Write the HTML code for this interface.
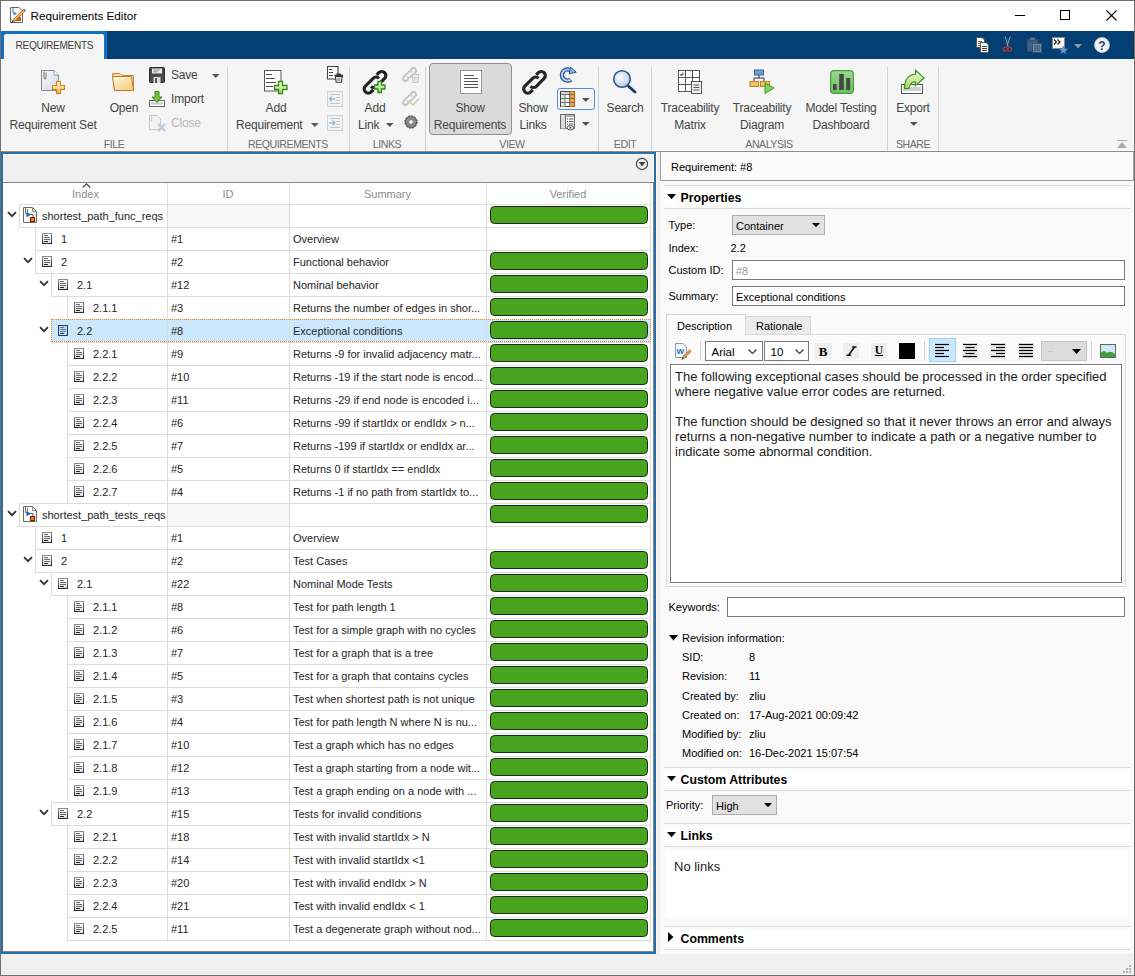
<!DOCTYPE html><html><head><meta charset="utf-8"><title>Requirements Editor</title>
<style>
html,body{margin:0;padding:0;}
body{width:1135px;height:976px;position:relative;overflow:hidden;background:#f0f0f0;font-family:"Liberation Sans", sans-serif;}
div,svg{box-sizing:border-box;}
</style></head><body>
<svg width="0" height="0" style="position:absolute"><defs><linearGradient id="gdi" x1="0" y1="0" x2="0" y2="1"><stop offset="0" stop-color="#ffffff"/><stop offset="1" stop-color="#d4e0ec"/></linearGradient><linearGradient id="gdb" x1="0" y1="0" x2="0" y2="1"><stop offset="0" stop-color="#8a8a8a"/><stop offset="1" stop-color="#2a2a2a"/></linearGradient></defs></svg>
<div style="position:absolute;left:0px;top:0px;width:1135px;height:31px;background:#fff;"></div>
<div style="position:absolute;left:0px;top:31px;width:1135px;height:28px;background:#033f72;"></div>
<div style="position:absolute;left:1px;top:31px;width:106px;height:28px;background:#126fc6;"></div>
<div style="position:absolute;left:4px;top:34px;width:100px;height:25px;background:#f5f5f5;border-radius:2px 2px 0 0;"></div>
<div style="position:absolute;left:0px;top:59px;width:1135px;height:92px;background:#f5f5f5;"></div>
<div style="position:absolute;left:0px;top:150px;width:1135px;height:1px;background:#ffffff;"></div>
<div style="position:absolute;left:0px;top:151px;width:1135px;height:1px;background:#8a8a8a;"></div>
<div style="position:absolute;left:30.50px;top:10.10px;font-size:11.7px;line-height:11.7px;color:#000;white-space:nowrap;">Requirements Editor</div>
<div style="position:absolute;left:1015px;top:15px;width:10px;height:1px;background:#000;"></div>
<div style="position:absolute;left:1060px;top:10px;width:10px;height:10px;border:1px solid #000;"></div>
<svg style="position:absolute;left:1106px;top:10px;" width="11" height="11" viewBox="0 0 11 11"><path d="M0.5 0.5 L10.5 10.5 M10.5 0.5 L0.5 10.5" stroke="#000" stroke-width="1.1"/></svg>
<div style="position:absolute;left:15.50px;top:41.15px;font-size:10.1px;line-height:10.1px;color:#3c3c3c;white-space:nowrap;letter-spacing:-0.3px;">REQUIREMENTS</div>
<div style="position:absolute;left:429px;top:63px;width:83px;height:72px;background:#dadada;border:1px solid #8f8f8f;border-radius:4px;"></div>
<div style="position:absolute;left:-47.00px;top:102.34px;width:200px;text-align:center;font-size:12px;line-height:12px;color:#444;white-space:nowrap;letter-spacing:-0.2px;">New</div>
<div style="position:absolute;left:-47.00px;top:118.54px;width:200px;text-align:center;font-size:12px;line-height:12px;color:#444;white-space:nowrap;letter-spacing:-0.2px;">Requirement Set</div>
<div style="position:absolute;left:24.00px;top:102.34px;width:200px;text-align:center;font-size:12px;line-height:12px;color:#444;white-space:nowrap;letter-spacing:-0.2px;">Open</div>
<div style="position:absolute;left:171.00px;top:69.34px;font-size:12px;line-height:12px;color:#444;white-space:nowrap;letter-spacing:-0.2px;">Save</div>
<div style="position:absolute;left:171.00px;top:93.34px;font-size:12px;line-height:12px;color:#444;white-space:nowrap;letter-spacing:-0.2px;">Import</div>
<div style="position:absolute;left:171.00px;top:117.34px;font-size:12px;line-height:12px;color:#b8b8b8;white-space:nowrap;letter-spacing:-0.2px;">Close</div>
<div style="position:absolute;left:176.00px;top:102.34px;width:200px;text-align:center;font-size:12px;line-height:12px;color:#444;white-space:nowrap;letter-spacing:-0.2px;">Add</div>
<div style="position:absolute;left:236.00px;top:118.54px;font-size:12px;line-height:12px;color:#444;white-space:nowrap;letter-spacing:-0.2px;">Requirement</div>
<div style="position:absolute;left:275.00px;top:102.34px;width:200px;text-align:center;font-size:12px;line-height:12px;color:#444;white-space:nowrap;letter-spacing:-0.2px;">Add</div>
<div style="position:absolute;left:358.00px;top:118.54px;font-size:12px;line-height:12px;color:#444;white-space:nowrap;letter-spacing:-0.2px;">Link</div>
<div style="position:absolute;left:370.00px;top:102.34px;width:200px;text-align:center;font-size:12px;line-height:12px;color:#444;white-space:nowrap;letter-spacing:-0.2px;">Show</div>
<div style="position:absolute;left:370.00px;top:118.54px;width:200px;text-align:center;font-size:12px;line-height:12px;color:#444;white-space:nowrap;letter-spacing:-0.2px;">Requirements</div>
<div style="position:absolute;left:433.00px;top:102.34px;width:200px;text-align:center;font-size:12px;line-height:12px;color:#444;white-space:nowrap;letter-spacing:-0.2px;">Show</div>
<div style="position:absolute;left:433.00px;top:118.54px;width:200px;text-align:center;font-size:12px;line-height:12px;color:#444;white-space:nowrap;letter-spacing:-0.2px;">Links</div>
<div style="position:absolute;left:525.00px;top:102.34px;width:200px;text-align:center;font-size:12px;line-height:12px;color:#444;white-space:nowrap;letter-spacing:-0.2px;">Search</div>
<div style="position:absolute;left:590.00px;top:102.34px;width:200px;text-align:center;font-size:12px;line-height:12px;color:#444;white-space:nowrap;letter-spacing:-0.2px;">Traceability</div>
<div style="position:absolute;left:590.00px;top:118.54px;width:200px;text-align:center;font-size:12px;line-height:12px;color:#444;white-space:nowrap;letter-spacing:-0.2px;">Matrix</div>
<div style="position:absolute;left:662.00px;top:102.34px;width:200px;text-align:center;font-size:12px;line-height:12px;color:#444;white-space:nowrap;letter-spacing:-0.2px;">Traceability</div>
<div style="position:absolute;left:662.00px;top:118.54px;width:200px;text-align:center;font-size:12px;line-height:12px;color:#444;white-space:nowrap;letter-spacing:-0.2px;">Diagram</div>
<div style="position:absolute;left:741.00px;top:102.34px;width:200px;text-align:center;font-size:12px;line-height:12px;color:#444;white-space:nowrap;letter-spacing:-0.2px;">Model Testing</div>
<div style="position:absolute;left:741.00px;top:118.54px;width:200px;text-align:center;font-size:12px;line-height:12px;color:#444;white-space:nowrap;letter-spacing:-0.2px;">Dashboard</div>
<div style="position:absolute;left:813.00px;top:102.34px;width:200px;text-align:center;font-size:12px;line-height:12px;color:#444;white-space:nowrap;letter-spacing:-0.2px;">Export</div>
<div style="position:absolute;left:14.00px;top:138.93px;width:200px;text-align:center;font-size:10.6px;line-height:10.6px;color:#6e6e6e;white-space:nowrap;letter-spacing:-0.45px;">FILE</div>
<div style="position:absolute;left:188.00px;top:138.93px;width:200px;text-align:center;font-size:10.6px;line-height:10.6px;color:#6e6e6e;white-space:nowrap;letter-spacing:-0.45px;">REQUIREMENTS</div>
<div style="position:absolute;left:287.00px;top:138.93px;width:200px;text-align:center;font-size:10.6px;line-height:10.6px;color:#6e6e6e;white-space:nowrap;letter-spacing:-0.45px;">LINKS</div>
<div style="position:absolute;left:412.00px;top:138.93px;width:200px;text-align:center;font-size:10.6px;line-height:10.6px;color:#6e6e6e;white-space:nowrap;letter-spacing:-0.45px;">VIEW</div>
<div style="position:absolute;left:525.00px;top:138.93px;width:200px;text-align:center;font-size:10.6px;line-height:10.6px;color:#6e6e6e;white-space:nowrap;letter-spacing:-0.45px;">EDIT</div>
<div style="position:absolute;left:669.00px;top:138.93px;width:200px;text-align:center;font-size:10.6px;line-height:10.6px;color:#6e6e6e;white-space:nowrap;letter-spacing:-0.45px;">ANALYSIS</div>
<div style="position:absolute;left:813.00px;top:138.93px;width:200px;text-align:center;font-size:10.6px;line-height:10.6px;color:#6e6e6e;white-space:nowrap;letter-spacing:-0.45px;">SHARE</div>
<div style="position:absolute;left:227px;top:67px;width:1px;height:84px;background:#d2d2d2;"></div>
<div style="position:absolute;left:349px;top:67px;width:1px;height:84px;background:#d2d2d2;"></div>
<div style="position:absolute;left:425px;top:67px;width:1px;height:84px;background:#d2d2d2;"></div>
<div style="position:absolute;left:598px;top:67px;width:1px;height:84px;background:#d2d2d2;"></div>
<div style="position:absolute;left:651px;top:67px;width:1px;height:84px;background:#d2d2d2;"></div>
<div style="position:absolute;left:887px;top:67px;width:1px;height:84px;background:#d2d2d2;"></div>
<div style="position:absolute;left:938px;top:67px;width:1px;height:84px;background:#d2d2d2;"></div>
<div style="position:absolute;left:1px;top:152px;width:655px;height:802px;border:2px solid #2a6ea6;background:#fff;"></div>
<div style="position:absolute;left:3px;top:154px;width:651px;height:1px;background:#fbf7f5;"></div>
<div style="position:absolute;left:3px;top:155px;width:650px;height:27px;background:#f0f0f0;"></div>
<div style="position:absolute;left:3px;top:182px;width:650px;height:1px;background:#80868e;"></div>
<div style="position:absolute;left:653px;top:182px;width:1px;height:770px;background:#80868e;"></div>
<div style="position:absolute;left:3px;top:951px;width:651px;height:1px;background:#80868e;"></div>
<svg style="position:absolute;left:635px;top:157px;" width="14" height="14" viewBox="0 0 14 14"><circle cx="7" cy="7" r="5.6" fill="none" stroke="#3a3a3a" stroke-width="1.1"/><path d="M3.6 5 H10.4 L7 9.6Z" fill="#444"/></svg>
<div style="position:absolute;left:5.50px;top:188.69px;width:160px;text-align:center;font-size:11px;line-height:11px;color:#8c8c8c;white-space:nowrap;">Index</div>
<svg style="position:absolute;left:82px;top:183px;" width="9" height="5" viewBox="0 0 9 5"><path d="M0.8 4.5 L4.5 0.8 L8.2 4.5" fill="none" stroke="#444" stroke-width="1.1"/></svg>
<div style="position:absolute;left:168.00px;top:188.69px;width:120px;text-align:center;font-size:11px;line-height:11px;color:#8c8c8c;white-space:nowrap;">ID</div>
<div style="position:absolute;left:292.50px;top:188.69px;width:190px;text-align:center;font-size:11px;line-height:11px;color:#8c8c8c;white-space:nowrap;">Summary</div>
<div style="position:absolute;left:488.00px;top:188.69px;width:160px;text-align:center;font-size:11px;line-height:11px;color:#8c8c8c;white-space:nowrap;">Verified</div>
<div style="position:absolute;left:167px;top:183px;width:1px;height:21px;background:#e3e3e3;"></div>
<div style="position:absolute;left:289px;top:183px;width:1px;height:21px;background:#e3e3e3;"></div>
<div style="position:absolute;left:486px;top:183px;width:1px;height:21px;background:#e3e3e3;"></div>
<div style="position:absolute;left:650px;top:183px;width:1px;height:21px;background:#e3e3e3;"></div>
<div style="position:absolute;left:19px;top:204px;width:632px;height:24px;border:1px solid #dcdcdc;background:#fff;"></div>
<div style="position:absolute;left:168px;top:205px;width:121px;height:22px;background:#f7f7f7;"></div>
<svg style="position:absolute;left:23px;top:207px;" width="14" height="16" viewBox="0 0 14 16"><path d="M0.5 0.5 H9.5 L13.5 4.5 V15.5 H0.5Z" fill="#fff" stroke="#6a6a6a"/><path d="M9.5 0.5 V4.5 H13.5" fill="none" stroke="#8a8a8a"/><path d="M2.5 1 V6.5 H4 M4.5 2 V5.5" fill="none" stroke="#6a7a6a"/><path d="M3.5 5 L8 7.5 L3.5 10.5Z" fill="#1f64b8"/><path d="M7.5 7.5 H10 V10.5" fill="none" stroke="#555"/><rect x="7" y="10" width="5" height="5" fill="#7a1800"/><rect x="8" y="11" width="3" height="3" fill="#f08020"/></svg>
<div style="position:absolute;left:42.00px;top:210.69px;font-size:11px;line-height:11px;color:#262626;white-space:nowrap;">shortest_path_func_reqs</div>
<svg style="position:absolute;left:6.5px;top:211px;" width="10" height="7" viewBox="0 0 10 7"><path d="M1 1.2 L5 5.2 L9 1.2" fill="none" stroke="#333" stroke-width="1.8"/></svg>
<div style="position:absolute;left:167px;top:204px;width:1px;height:24px;background:#dcdcdc;"></div>
<div style="position:absolute;left:289px;top:204px;width:1px;height:24px;background:#dcdcdc;"></div>
<div style="position:absolute;left:486px;top:204px;width:1px;height:24px;background:#dcdcdc;"></div>
<div style="position:absolute;left:489.5px;top:206.1px;width:158.6px;height:18px;background:#48a41e;border:1.25px solid #1b2a12;border-radius:4.5px;"></div>
<div style="position:absolute;left:35px;top:227px;width:616px;height:24px;border:1px solid #dcdcdc;background:#fff;"></div>
<svg style="position:absolute;left:42px;top:233px;" width="10" height="11" viewBox="0 0 10 11"><rect x="0.5" y="0.5" width="9" height="10" fill="url(#gdi)" stroke="url(#gdb)"/><path d="M2 2.5h4M2 4.5h6M2 6.5h6" stroke="#6a6a6a" stroke-width="1"/><path d="M2 8.5h4" stroke="#2a2a2a" stroke-width="1"/></svg>
<div style="position:absolute;left:61.00px;top:233.69px;font-size:11px;line-height:11px;color:#262626;white-space:nowrap;">1</div>
<div style="position:absolute;left:171.00px;top:233.69px;font-size:11px;line-height:11px;color:#262626;white-space:nowrap;">#1</div>
<div style="position:absolute;left:293.00px;top:233.69px;font-size:11px;line-height:11px;color:#262626;white-space:nowrap;">Overview</div>
<div style="position:absolute;left:167px;top:227px;width:1px;height:24px;background:#dcdcdc;"></div>
<div style="position:absolute;left:289px;top:227px;width:1px;height:24px;background:#dcdcdc;"></div>
<div style="position:absolute;left:486px;top:227px;width:1px;height:24px;background:#dcdcdc;"></div>
<div style="position:absolute;left:35px;top:250px;width:616px;height:24px;border:1px solid #dcdcdc;background:#fff;"></div>
<svg style="position:absolute;left:42px;top:256px;" width="10" height="11" viewBox="0 0 10 11"><rect x="0.5" y="0.5" width="9" height="10" fill="url(#gdi)" stroke="url(#gdb)"/><path d="M2 2.5h4M2 4.5h6M2 6.5h6" stroke="#6a6a6a" stroke-width="1"/><path d="M2 8.5h4" stroke="#2a2a2a" stroke-width="1"/></svg>
<div style="position:absolute;left:61.00px;top:256.69px;font-size:11px;line-height:11px;color:#262626;white-space:nowrap;">2</div>
<div style="position:absolute;left:171.00px;top:256.69px;font-size:11px;line-height:11px;color:#262626;white-space:nowrap;">#2</div>
<div style="position:absolute;left:293.00px;top:256.69px;font-size:11px;line-height:11px;color:#262626;white-space:nowrap;">Functional behavior</div>
<svg style="position:absolute;left:22.5px;top:257px;" width="10" height="7" viewBox="0 0 10 7"><path d="M1 1.2 L5 5.2 L9 1.2" fill="none" stroke="#333" stroke-width="1.8"/></svg>
<div style="position:absolute;left:167px;top:250px;width:1px;height:24px;background:#dcdcdc;"></div>
<div style="position:absolute;left:289px;top:250px;width:1px;height:24px;background:#dcdcdc;"></div>
<div style="position:absolute;left:486px;top:250px;width:1px;height:24px;background:#dcdcdc;"></div>
<div style="position:absolute;left:489.5px;top:252.1px;width:158.6px;height:18px;background:#48a41e;border:1.25px solid #1b2a12;border-radius:4.5px;"></div>
<div style="position:absolute;left:51px;top:273px;width:600px;height:24px;border:1px solid #dcdcdc;background:#fff;"></div>
<svg style="position:absolute;left:58px;top:279px;" width="10" height="11" viewBox="0 0 10 11"><rect x="0.5" y="0.5" width="9" height="10" fill="url(#gdi)" stroke="url(#gdb)"/><path d="M2 2.5h4M2 4.5h6M2 6.5h6" stroke="#6a6a6a" stroke-width="1"/><path d="M2 8.5h4" stroke="#2a2a2a" stroke-width="1"/></svg>
<div style="position:absolute;left:77.00px;top:279.69px;font-size:11px;line-height:11px;color:#262626;white-space:nowrap;">2.1</div>
<div style="position:absolute;left:171.00px;top:279.69px;font-size:11px;line-height:11px;color:#262626;white-space:nowrap;">#12</div>
<div style="position:absolute;left:293.00px;top:279.69px;font-size:11px;line-height:11px;color:#262626;white-space:nowrap;">Nominal behavior</div>
<svg style="position:absolute;left:38.5px;top:280px;" width="10" height="7" viewBox="0 0 10 7"><path d="M1 1.2 L5 5.2 L9 1.2" fill="none" stroke="#333" stroke-width="1.8"/></svg>
<div style="position:absolute;left:167px;top:273px;width:1px;height:24px;background:#dcdcdc;"></div>
<div style="position:absolute;left:289px;top:273px;width:1px;height:24px;background:#dcdcdc;"></div>
<div style="position:absolute;left:486px;top:273px;width:1px;height:24px;background:#dcdcdc;"></div>
<div style="position:absolute;left:489.5px;top:275.1px;width:158.6px;height:18px;background:#48a41e;border:1.25px solid #1b2a12;border-radius:4.5px;"></div>
<div style="position:absolute;left:67px;top:296px;width:584px;height:24px;border:1px solid #dcdcdc;background:#fff;"></div>
<svg style="position:absolute;left:74px;top:302px;" width="10" height="11" viewBox="0 0 10 11"><rect x="0.5" y="0.5" width="9" height="10" fill="url(#gdi)" stroke="url(#gdb)"/><path d="M2 2.5h4M2 4.5h6M2 6.5h6" stroke="#6a6a6a" stroke-width="1"/><path d="M2 8.5h4" stroke="#2a2a2a" stroke-width="1"/></svg>
<div style="position:absolute;left:93.00px;top:302.69px;font-size:11px;line-height:11px;color:#262626;white-space:nowrap;">2.1.1</div>
<div style="position:absolute;left:171.00px;top:302.69px;font-size:11px;line-height:11px;color:#262626;white-space:nowrap;">#3</div>
<div style="position:absolute;left:293.00px;top:302.69px;font-size:11px;line-height:11px;color:#262626;white-space:nowrap;">Returns the number of edges in shor...</div>
<div style="position:absolute;left:167px;top:296px;width:1px;height:24px;background:#dcdcdc;"></div>
<div style="position:absolute;left:289px;top:296px;width:1px;height:24px;background:#dcdcdc;"></div>
<div style="position:absolute;left:486px;top:296px;width:1px;height:24px;background:#dcdcdc;"></div>
<div style="position:absolute;left:489.5px;top:298.1px;width:158.6px;height:18px;background:#48a41e;border:1.25px solid #1b2a12;border-radius:4.5px;"></div>
<div style="position:absolute;left:51px;top:319px;width:600px;height:24px;border:1px solid #dcdcdc;background:#fff;"></div>
<div style="position:absolute;left:52px;top:320px;width:598px;height:21px;background:#cce8ff;"></div>
<svg style="position:absolute;left:58px;top:325px;" width="10" height="11" viewBox="0 0 10 11"><rect x="0.5" y="0.5" width="9" height="10" fill="#c4d8ec" stroke="#1f3f66"/><path d="M2 2.5h4M2 4.5h6M2 6.5h6" stroke="#5a7aa0" stroke-width="1"/><path d="M2 8.5h4" stroke="#1f3f66" stroke-width="1"/></svg>
<div style="position:absolute;left:77.00px;top:325.69px;font-size:11px;line-height:11px;color:#262626;white-space:nowrap;">2.2</div>
<div style="position:absolute;left:171.00px;top:325.69px;font-size:11px;line-height:11px;color:#262626;white-space:nowrap;">#8</div>
<div style="position:absolute;left:293.00px;top:325.69px;font-size:11px;line-height:11px;color:#262626;white-space:nowrap;">Exceptional conditions</div>
<svg style="position:absolute;left:38.5px;top:326px;" width="10" height="7" viewBox="0 0 10 7"><path d="M1 1.2 L5 5.2 L9 1.2" fill="none" stroke="#333" stroke-width="1.8"/></svg>
<div style="position:absolute;left:167px;top:319px;width:1px;height:24px;background:#dcdcdc;"></div>
<div style="position:absolute;left:289px;top:319px;width:1px;height:24px;background:#dcdcdc;"></div>
<div style="position:absolute;left:486px;top:319px;width:1px;height:24px;background:#dcdcdc;"></div>
<div style="position:absolute;left:489.5px;top:321.1px;width:158.6px;height:18px;background:#48a41e;border:1.25px solid #1b2a12;border-radius:4.5px;"></div>
<div style="position:absolute;left:51px;top:319px;width:600px;height:23px;border:1px dotted #f08a24;"></div>
<div style="position:absolute;left:67px;top:342px;width:584px;height:24px;border:1px solid #dcdcdc;background:#fff;"></div>
<svg style="position:absolute;left:74px;top:348px;" width="10" height="11" viewBox="0 0 10 11"><rect x="0.5" y="0.5" width="9" height="10" fill="url(#gdi)" stroke="url(#gdb)"/><path d="M2 2.5h4M2 4.5h6M2 6.5h6" stroke="#6a6a6a" stroke-width="1"/><path d="M2 8.5h4" stroke="#2a2a2a" stroke-width="1"/></svg>
<div style="position:absolute;left:93.00px;top:348.69px;font-size:11px;line-height:11px;color:#262626;white-space:nowrap;">2.2.1</div>
<div style="position:absolute;left:171.00px;top:348.69px;font-size:11px;line-height:11px;color:#262626;white-space:nowrap;">#9</div>
<div style="position:absolute;left:293.00px;top:348.69px;font-size:11px;line-height:11px;color:#262626;white-space:nowrap;">Returns -9 for invalid adjacency matr...</div>
<div style="position:absolute;left:167px;top:342px;width:1px;height:24px;background:#dcdcdc;"></div>
<div style="position:absolute;left:289px;top:342px;width:1px;height:24px;background:#dcdcdc;"></div>
<div style="position:absolute;left:486px;top:342px;width:1px;height:24px;background:#dcdcdc;"></div>
<div style="position:absolute;left:489.5px;top:344.1px;width:158.6px;height:18px;background:#48a41e;border:1.25px solid #1b2a12;border-radius:4.5px;"></div>
<div style="position:absolute;left:67px;top:365px;width:584px;height:24px;border:1px solid #dcdcdc;background:#fff;"></div>
<svg style="position:absolute;left:74px;top:371px;" width="10" height="11" viewBox="0 0 10 11"><rect x="0.5" y="0.5" width="9" height="10" fill="url(#gdi)" stroke="url(#gdb)"/><path d="M2 2.5h4M2 4.5h6M2 6.5h6" stroke="#6a6a6a" stroke-width="1"/><path d="M2 8.5h4" stroke="#2a2a2a" stroke-width="1"/></svg>
<div style="position:absolute;left:93.00px;top:371.69px;font-size:11px;line-height:11px;color:#262626;white-space:nowrap;">2.2.2</div>
<div style="position:absolute;left:171.00px;top:371.69px;font-size:11px;line-height:11px;color:#262626;white-space:nowrap;">#10</div>
<div style="position:absolute;left:293.00px;top:371.69px;font-size:11px;line-height:11px;color:#262626;white-space:nowrap;">Returns -19 if the start node is encod...</div>
<div style="position:absolute;left:167px;top:365px;width:1px;height:24px;background:#dcdcdc;"></div>
<div style="position:absolute;left:289px;top:365px;width:1px;height:24px;background:#dcdcdc;"></div>
<div style="position:absolute;left:486px;top:365px;width:1px;height:24px;background:#dcdcdc;"></div>
<div style="position:absolute;left:489.5px;top:367.1px;width:158.6px;height:18px;background:#48a41e;border:1.25px solid #1b2a12;border-radius:4.5px;"></div>
<div style="position:absolute;left:67px;top:388px;width:584px;height:24px;border:1px solid #dcdcdc;background:#fff;"></div>
<svg style="position:absolute;left:74px;top:394px;" width="10" height="11" viewBox="0 0 10 11"><rect x="0.5" y="0.5" width="9" height="10" fill="url(#gdi)" stroke="url(#gdb)"/><path d="M2 2.5h4M2 4.5h6M2 6.5h6" stroke="#6a6a6a" stroke-width="1"/><path d="M2 8.5h4" stroke="#2a2a2a" stroke-width="1"/></svg>
<div style="position:absolute;left:93.00px;top:394.69px;font-size:11px;line-height:11px;color:#262626;white-space:nowrap;">2.2.3</div>
<div style="position:absolute;left:171.00px;top:394.69px;font-size:11px;line-height:11px;color:#262626;white-space:nowrap;">#11</div>
<div style="position:absolute;left:293.00px;top:394.69px;font-size:11px;line-height:11px;color:#262626;white-space:nowrap;">Returns -29 if end node is encoded i...</div>
<div style="position:absolute;left:167px;top:388px;width:1px;height:24px;background:#dcdcdc;"></div>
<div style="position:absolute;left:289px;top:388px;width:1px;height:24px;background:#dcdcdc;"></div>
<div style="position:absolute;left:486px;top:388px;width:1px;height:24px;background:#dcdcdc;"></div>
<div style="position:absolute;left:489.5px;top:390.1px;width:158.6px;height:18px;background:#48a41e;border:1.25px solid #1b2a12;border-radius:4.5px;"></div>
<div style="position:absolute;left:67px;top:411px;width:584px;height:24px;border:1px solid #dcdcdc;background:#fff;"></div>
<svg style="position:absolute;left:74px;top:417px;" width="10" height="11" viewBox="0 0 10 11"><rect x="0.5" y="0.5" width="9" height="10" fill="url(#gdi)" stroke="url(#gdb)"/><path d="M2 2.5h4M2 4.5h6M2 6.5h6" stroke="#6a6a6a" stroke-width="1"/><path d="M2 8.5h4" stroke="#2a2a2a" stroke-width="1"/></svg>
<div style="position:absolute;left:93.00px;top:417.69px;font-size:11px;line-height:11px;color:#262626;white-space:nowrap;">2.2.4</div>
<div style="position:absolute;left:171.00px;top:417.69px;font-size:11px;line-height:11px;color:#262626;white-space:nowrap;">#6</div>
<div style="position:absolute;left:293.00px;top:417.69px;font-size:11px;line-height:11px;color:#262626;white-space:nowrap;">Returns -99 if startIdx or endIdx &gt; n...</div>
<div style="position:absolute;left:167px;top:411px;width:1px;height:24px;background:#dcdcdc;"></div>
<div style="position:absolute;left:289px;top:411px;width:1px;height:24px;background:#dcdcdc;"></div>
<div style="position:absolute;left:486px;top:411px;width:1px;height:24px;background:#dcdcdc;"></div>
<div style="position:absolute;left:489.5px;top:413.1px;width:158.6px;height:18px;background:#48a41e;border:1.25px solid #1b2a12;border-radius:4.5px;"></div>
<div style="position:absolute;left:67px;top:434px;width:584px;height:24px;border:1px solid #dcdcdc;background:#fff;"></div>
<svg style="position:absolute;left:74px;top:440px;" width="10" height="11" viewBox="0 0 10 11"><rect x="0.5" y="0.5" width="9" height="10" fill="url(#gdi)" stroke="url(#gdb)"/><path d="M2 2.5h4M2 4.5h6M2 6.5h6" stroke="#6a6a6a" stroke-width="1"/><path d="M2 8.5h4" stroke="#2a2a2a" stroke-width="1"/></svg>
<div style="position:absolute;left:93.00px;top:440.69px;font-size:11px;line-height:11px;color:#262626;white-space:nowrap;">2.2.5</div>
<div style="position:absolute;left:171.00px;top:440.69px;font-size:11px;line-height:11px;color:#262626;white-space:nowrap;">#7</div>
<div style="position:absolute;left:293.00px;top:440.69px;font-size:11px;line-height:11px;color:#262626;white-space:nowrap;">Returns -199 if startIdx or endIdx ar...</div>
<div style="position:absolute;left:167px;top:434px;width:1px;height:24px;background:#dcdcdc;"></div>
<div style="position:absolute;left:289px;top:434px;width:1px;height:24px;background:#dcdcdc;"></div>
<div style="position:absolute;left:486px;top:434px;width:1px;height:24px;background:#dcdcdc;"></div>
<div style="position:absolute;left:489.5px;top:436.1px;width:158.6px;height:18px;background:#48a41e;border:1.25px solid #1b2a12;border-radius:4.5px;"></div>
<div style="position:absolute;left:67px;top:457px;width:584px;height:24px;border:1px solid #dcdcdc;background:#fff;"></div>
<svg style="position:absolute;left:74px;top:463px;" width="10" height="11" viewBox="0 0 10 11"><rect x="0.5" y="0.5" width="9" height="10" fill="url(#gdi)" stroke="url(#gdb)"/><path d="M2 2.5h4M2 4.5h6M2 6.5h6" stroke="#6a6a6a" stroke-width="1"/><path d="M2 8.5h4" stroke="#2a2a2a" stroke-width="1"/></svg>
<div style="position:absolute;left:93.00px;top:463.69px;font-size:11px;line-height:11px;color:#262626;white-space:nowrap;">2.2.6</div>
<div style="position:absolute;left:171.00px;top:463.69px;font-size:11px;line-height:11px;color:#262626;white-space:nowrap;">#5</div>
<div style="position:absolute;left:293.00px;top:463.69px;font-size:11px;line-height:11px;color:#262626;white-space:nowrap;">Returns 0 if startIdx == endIdx</div>
<div style="position:absolute;left:167px;top:457px;width:1px;height:24px;background:#dcdcdc;"></div>
<div style="position:absolute;left:289px;top:457px;width:1px;height:24px;background:#dcdcdc;"></div>
<div style="position:absolute;left:486px;top:457px;width:1px;height:24px;background:#dcdcdc;"></div>
<div style="position:absolute;left:489.5px;top:459.1px;width:158.6px;height:18px;background:#48a41e;border:1.25px solid #1b2a12;border-radius:4.5px;"></div>
<div style="position:absolute;left:67px;top:480px;width:584px;height:24px;border:1px solid #dcdcdc;background:#fff;"></div>
<svg style="position:absolute;left:74px;top:486px;" width="10" height="11" viewBox="0 0 10 11"><rect x="0.5" y="0.5" width="9" height="10" fill="url(#gdi)" stroke="url(#gdb)"/><path d="M2 2.5h4M2 4.5h6M2 6.5h6" stroke="#6a6a6a" stroke-width="1"/><path d="M2 8.5h4" stroke="#2a2a2a" stroke-width="1"/></svg>
<div style="position:absolute;left:93.00px;top:486.69px;font-size:11px;line-height:11px;color:#262626;white-space:nowrap;">2.2.7</div>
<div style="position:absolute;left:171.00px;top:486.69px;font-size:11px;line-height:11px;color:#262626;white-space:nowrap;">#4</div>
<div style="position:absolute;left:293.00px;top:486.69px;font-size:11px;line-height:11px;color:#262626;white-space:nowrap;">Returns -1 if no path from startIdx to...</div>
<div style="position:absolute;left:167px;top:480px;width:1px;height:24px;background:#dcdcdc;"></div>
<div style="position:absolute;left:289px;top:480px;width:1px;height:24px;background:#dcdcdc;"></div>
<div style="position:absolute;left:486px;top:480px;width:1px;height:24px;background:#dcdcdc;"></div>
<div style="position:absolute;left:489.5px;top:482.1px;width:158.6px;height:18px;background:#48a41e;border:1.25px solid #1b2a12;border-radius:4.5px;"></div>
<div style="position:absolute;left:19px;top:503px;width:632px;height:24px;border:1px solid #dcdcdc;background:#fff;"></div>
<div style="position:absolute;left:168px;top:504px;width:121px;height:22px;background:#f7f7f7;"></div>
<svg style="position:absolute;left:23px;top:506px;" width="14" height="16" viewBox="0 0 14 16"><path d="M0.5 0.5 H9.5 L13.5 4.5 V15.5 H0.5Z" fill="#fff" stroke="#6a6a6a"/><path d="M9.5 0.5 V4.5 H13.5" fill="none" stroke="#8a8a8a"/><path d="M2.5 1 V6.5 H4 M4.5 2 V5.5" fill="none" stroke="#6a7a6a"/><path d="M3.5 5 L8 7.5 L3.5 10.5Z" fill="#1f64b8"/><path d="M7.5 7.5 H10 V10.5" fill="none" stroke="#555"/><rect x="7" y="10" width="5" height="5" fill="#7a1800"/><rect x="8" y="11" width="3" height="3" fill="#f08020"/></svg>
<div style="position:absolute;left:42.00px;top:509.69px;font-size:11px;line-height:11px;color:#262626;white-space:nowrap;">shortest_path_tests_reqs</div>
<svg style="position:absolute;left:6.5px;top:510px;" width="10" height="7" viewBox="0 0 10 7"><path d="M1 1.2 L5 5.2 L9 1.2" fill="none" stroke="#333" stroke-width="1.8"/></svg>
<div style="position:absolute;left:167px;top:503px;width:1px;height:24px;background:#dcdcdc;"></div>
<div style="position:absolute;left:289px;top:503px;width:1px;height:24px;background:#dcdcdc;"></div>
<div style="position:absolute;left:486px;top:503px;width:1px;height:24px;background:#dcdcdc;"></div>
<div style="position:absolute;left:489.5px;top:505.1px;width:158.6px;height:18px;background:#48a41e;border:1.25px solid #1b2a12;border-radius:4.5px;"></div>
<div style="position:absolute;left:35px;top:526px;width:616px;height:24px;border:1px solid #dcdcdc;background:#fff;"></div>
<svg style="position:absolute;left:42px;top:532px;" width="10" height="11" viewBox="0 0 10 11"><rect x="0.5" y="0.5" width="9" height="10" fill="url(#gdi)" stroke="url(#gdb)"/><path d="M2 2.5h4M2 4.5h6M2 6.5h6" stroke="#6a6a6a" stroke-width="1"/><path d="M2 8.5h4" stroke="#2a2a2a" stroke-width="1"/></svg>
<div style="position:absolute;left:61.00px;top:532.69px;font-size:11px;line-height:11px;color:#262626;white-space:nowrap;">1</div>
<div style="position:absolute;left:171.00px;top:532.69px;font-size:11px;line-height:11px;color:#262626;white-space:nowrap;">#1</div>
<div style="position:absolute;left:293.00px;top:532.69px;font-size:11px;line-height:11px;color:#262626;white-space:nowrap;">Overview</div>
<div style="position:absolute;left:167px;top:526px;width:1px;height:24px;background:#dcdcdc;"></div>
<div style="position:absolute;left:289px;top:526px;width:1px;height:24px;background:#dcdcdc;"></div>
<div style="position:absolute;left:486px;top:526px;width:1px;height:24px;background:#dcdcdc;"></div>
<div style="position:absolute;left:35px;top:549px;width:616px;height:24px;border:1px solid #dcdcdc;background:#fff;"></div>
<svg style="position:absolute;left:42px;top:555px;" width="10" height="11" viewBox="0 0 10 11"><rect x="0.5" y="0.5" width="9" height="10" fill="url(#gdi)" stroke="url(#gdb)"/><path d="M2 2.5h4M2 4.5h6M2 6.5h6" stroke="#6a6a6a" stroke-width="1"/><path d="M2 8.5h4" stroke="#2a2a2a" stroke-width="1"/></svg>
<div style="position:absolute;left:61.00px;top:555.69px;font-size:11px;line-height:11px;color:#262626;white-space:nowrap;">2</div>
<div style="position:absolute;left:171.00px;top:555.69px;font-size:11px;line-height:11px;color:#262626;white-space:nowrap;">#2</div>
<div style="position:absolute;left:293.00px;top:555.69px;font-size:11px;line-height:11px;color:#262626;white-space:nowrap;">Test Cases</div>
<svg style="position:absolute;left:22.5px;top:556px;" width="10" height="7" viewBox="0 0 10 7"><path d="M1 1.2 L5 5.2 L9 1.2" fill="none" stroke="#333" stroke-width="1.8"/></svg>
<div style="position:absolute;left:167px;top:549px;width:1px;height:24px;background:#dcdcdc;"></div>
<div style="position:absolute;left:289px;top:549px;width:1px;height:24px;background:#dcdcdc;"></div>
<div style="position:absolute;left:486px;top:549px;width:1px;height:24px;background:#dcdcdc;"></div>
<div style="position:absolute;left:489.5px;top:551.1px;width:158.6px;height:18px;background:#48a41e;border:1.25px solid #1b2a12;border-radius:4.5px;"></div>
<div style="position:absolute;left:51px;top:572px;width:600px;height:24px;border:1px solid #dcdcdc;background:#fff;"></div>
<svg style="position:absolute;left:58px;top:578px;" width="10" height="11" viewBox="0 0 10 11"><rect x="0.5" y="0.5" width="9" height="10" fill="url(#gdi)" stroke="url(#gdb)"/><path d="M2 2.5h4M2 4.5h6M2 6.5h6" stroke="#6a6a6a" stroke-width="1"/><path d="M2 8.5h4" stroke="#2a2a2a" stroke-width="1"/></svg>
<div style="position:absolute;left:77.00px;top:578.69px;font-size:11px;line-height:11px;color:#262626;white-space:nowrap;">2.1</div>
<div style="position:absolute;left:171.00px;top:578.69px;font-size:11px;line-height:11px;color:#262626;white-space:nowrap;">#22</div>
<div style="position:absolute;left:293.00px;top:578.69px;font-size:11px;line-height:11px;color:#262626;white-space:nowrap;">Nominal Mode Tests</div>
<svg style="position:absolute;left:38.5px;top:579px;" width="10" height="7" viewBox="0 0 10 7"><path d="M1 1.2 L5 5.2 L9 1.2" fill="none" stroke="#333" stroke-width="1.8"/></svg>
<div style="position:absolute;left:167px;top:572px;width:1px;height:24px;background:#dcdcdc;"></div>
<div style="position:absolute;left:289px;top:572px;width:1px;height:24px;background:#dcdcdc;"></div>
<div style="position:absolute;left:486px;top:572px;width:1px;height:24px;background:#dcdcdc;"></div>
<div style="position:absolute;left:489.5px;top:574.1px;width:158.6px;height:18px;background:#48a41e;border:1.25px solid #1b2a12;border-radius:4.5px;"></div>
<div style="position:absolute;left:67px;top:595px;width:584px;height:24px;border:1px solid #dcdcdc;background:#fff;"></div>
<svg style="position:absolute;left:74px;top:601px;" width="10" height="11" viewBox="0 0 10 11"><rect x="0.5" y="0.5" width="9" height="10" fill="url(#gdi)" stroke="url(#gdb)"/><path d="M2 2.5h4M2 4.5h6M2 6.5h6" stroke="#6a6a6a" stroke-width="1"/><path d="M2 8.5h4" stroke="#2a2a2a" stroke-width="1"/></svg>
<div style="position:absolute;left:93.00px;top:601.69px;font-size:11px;line-height:11px;color:#262626;white-space:nowrap;">2.1.1</div>
<div style="position:absolute;left:171.00px;top:601.69px;font-size:11px;line-height:11px;color:#262626;white-space:nowrap;">#8</div>
<div style="position:absolute;left:293.00px;top:601.69px;font-size:11px;line-height:11px;color:#262626;white-space:nowrap;">Test for path length 1</div>
<div style="position:absolute;left:167px;top:595px;width:1px;height:24px;background:#dcdcdc;"></div>
<div style="position:absolute;left:289px;top:595px;width:1px;height:24px;background:#dcdcdc;"></div>
<div style="position:absolute;left:486px;top:595px;width:1px;height:24px;background:#dcdcdc;"></div>
<div style="position:absolute;left:489.5px;top:597.1px;width:158.6px;height:18px;background:#48a41e;border:1.25px solid #1b2a12;border-radius:4.5px;"></div>
<div style="position:absolute;left:67px;top:618px;width:584px;height:24px;border:1px solid #dcdcdc;background:#fff;"></div>
<svg style="position:absolute;left:74px;top:624px;" width="10" height="11" viewBox="0 0 10 11"><rect x="0.5" y="0.5" width="9" height="10" fill="url(#gdi)" stroke="url(#gdb)"/><path d="M2 2.5h4M2 4.5h6M2 6.5h6" stroke="#6a6a6a" stroke-width="1"/><path d="M2 8.5h4" stroke="#2a2a2a" stroke-width="1"/></svg>
<div style="position:absolute;left:93.00px;top:624.69px;font-size:11px;line-height:11px;color:#262626;white-space:nowrap;">2.1.2</div>
<div style="position:absolute;left:171.00px;top:624.69px;font-size:11px;line-height:11px;color:#262626;white-space:nowrap;">#6</div>
<div style="position:absolute;left:293.00px;top:624.69px;font-size:11px;line-height:11px;color:#262626;white-space:nowrap;">Test for a simple graph with no cycles</div>
<div style="position:absolute;left:167px;top:618px;width:1px;height:24px;background:#dcdcdc;"></div>
<div style="position:absolute;left:289px;top:618px;width:1px;height:24px;background:#dcdcdc;"></div>
<div style="position:absolute;left:486px;top:618px;width:1px;height:24px;background:#dcdcdc;"></div>
<div style="position:absolute;left:489.5px;top:620.1px;width:158.6px;height:18px;background:#48a41e;border:1.25px solid #1b2a12;border-radius:4.5px;"></div>
<div style="position:absolute;left:67px;top:641px;width:584px;height:24px;border:1px solid #dcdcdc;background:#fff;"></div>
<svg style="position:absolute;left:74px;top:647px;" width="10" height="11" viewBox="0 0 10 11"><rect x="0.5" y="0.5" width="9" height="10" fill="url(#gdi)" stroke="url(#gdb)"/><path d="M2 2.5h4M2 4.5h6M2 6.5h6" stroke="#6a6a6a" stroke-width="1"/><path d="M2 8.5h4" stroke="#2a2a2a" stroke-width="1"/></svg>
<div style="position:absolute;left:93.00px;top:647.69px;font-size:11px;line-height:11px;color:#262626;white-space:nowrap;">2.1.3</div>
<div style="position:absolute;left:171.00px;top:647.69px;font-size:11px;line-height:11px;color:#262626;white-space:nowrap;">#7</div>
<div style="position:absolute;left:293.00px;top:647.69px;font-size:11px;line-height:11px;color:#262626;white-space:nowrap;">Test for a graph that is a tree</div>
<div style="position:absolute;left:167px;top:641px;width:1px;height:24px;background:#dcdcdc;"></div>
<div style="position:absolute;left:289px;top:641px;width:1px;height:24px;background:#dcdcdc;"></div>
<div style="position:absolute;left:486px;top:641px;width:1px;height:24px;background:#dcdcdc;"></div>
<div style="position:absolute;left:489.5px;top:643.1px;width:158.6px;height:18px;background:#48a41e;border:1.25px solid #1b2a12;border-radius:4.5px;"></div>
<div style="position:absolute;left:67px;top:664px;width:584px;height:24px;border:1px solid #dcdcdc;background:#fff;"></div>
<svg style="position:absolute;left:74px;top:670px;" width="10" height="11" viewBox="0 0 10 11"><rect x="0.5" y="0.5" width="9" height="10" fill="url(#gdi)" stroke="url(#gdb)"/><path d="M2 2.5h4M2 4.5h6M2 6.5h6" stroke="#6a6a6a" stroke-width="1"/><path d="M2 8.5h4" stroke="#2a2a2a" stroke-width="1"/></svg>
<div style="position:absolute;left:93.00px;top:670.69px;font-size:11px;line-height:11px;color:#262626;white-space:nowrap;">2.1.4</div>
<div style="position:absolute;left:171.00px;top:670.69px;font-size:11px;line-height:11px;color:#262626;white-space:nowrap;">#5</div>
<div style="position:absolute;left:293.00px;top:670.69px;font-size:11px;line-height:11px;color:#262626;white-space:nowrap;">Test for a graph that contains cycles</div>
<div style="position:absolute;left:167px;top:664px;width:1px;height:24px;background:#dcdcdc;"></div>
<div style="position:absolute;left:289px;top:664px;width:1px;height:24px;background:#dcdcdc;"></div>
<div style="position:absolute;left:486px;top:664px;width:1px;height:24px;background:#dcdcdc;"></div>
<div style="position:absolute;left:489.5px;top:666.1px;width:158.6px;height:18px;background:#48a41e;border:1.25px solid #1b2a12;border-radius:4.5px;"></div>
<div style="position:absolute;left:67px;top:687px;width:584px;height:24px;border:1px solid #dcdcdc;background:#fff;"></div>
<svg style="position:absolute;left:74px;top:693px;" width="10" height="11" viewBox="0 0 10 11"><rect x="0.5" y="0.5" width="9" height="10" fill="url(#gdi)" stroke="url(#gdb)"/><path d="M2 2.5h4M2 4.5h6M2 6.5h6" stroke="#6a6a6a" stroke-width="1"/><path d="M2 8.5h4" stroke="#2a2a2a" stroke-width="1"/></svg>
<div style="position:absolute;left:93.00px;top:693.69px;font-size:11px;line-height:11px;color:#262626;white-space:nowrap;">2.1.5</div>
<div style="position:absolute;left:171.00px;top:693.69px;font-size:11px;line-height:11px;color:#262626;white-space:nowrap;">#3</div>
<div style="position:absolute;left:293.00px;top:693.69px;font-size:11px;line-height:11px;color:#262626;white-space:nowrap;">Test when shortest path is not unique</div>
<div style="position:absolute;left:167px;top:687px;width:1px;height:24px;background:#dcdcdc;"></div>
<div style="position:absolute;left:289px;top:687px;width:1px;height:24px;background:#dcdcdc;"></div>
<div style="position:absolute;left:486px;top:687px;width:1px;height:24px;background:#dcdcdc;"></div>
<div style="position:absolute;left:489.5px;top:689.1px;width:158.6px;height:18px;background:#48a41e;border:1.25px solid #1b2a12;border-radius:4.5px;"></div>
<div style="position:absolute;left:67px;top:710px;width:584px;height:24px;border:1px solid #dcdcdc;background:#fff;"></div>
<svg style="position:absolute;left:74px;top:716px;" width="10" height="11" viewBox="0 0 10 11"><rect x="0.5" y="0.5" width="9" height="10" fill="url(#gdi)" stroke="url(#gdb)"/><path d="M2 2.5h4M2 4.5h6M2 6.5h6" stroke="#6a6a6a" stroke-width="1"/><path d="M2 8.5h4" stroke="#2a2a2a" stroke-width="1"/></svg>
<div style="position:absolute;left:93.00px;top:716.69px;font-size:11px;line-height:11px;color:#262626;white-space:nowrap;">2.1.6</div>
<div style="position:absolute;left:171.00px;top:716.69px;font-size:11px;line-height:11px;color:#262626;white-space:nowrap;">#4</div>
<div style="position:absolute;left:293.00px;top:716.69px;font-size:11px;line-height:11px;color:#262626;white-space:nowrap;">Test for path length N where N is nu...</div>
<div style="position:absolute;left:167px;top:710px;width:1px;height:24px;background:#dcdcdc;"></div>
<div style="position:absolute;left:289px;top:710px;width:1px;height:24px;background:#dcdcdc;"></div>
<div style="position:absolute;left:486px;top:710px;width:1px;height:24px;background:#dcdcdc;"></div>
<div style="position:absolute;left:489.5px;top:712.1px;width:158.6px;height:18px;background:#48a41e;border:1.25px solid #1b2a12;border-radius:4.5px;"></div>
<div style="position:absolute;left:67px;top:733px;width:584px;height:24px;border:1px solid #dcdcdc;background:#fff;"></div>
<svg style="position:absolute;left:74px;top:739px;" width="10" height="11" viewBox="0 0 10 11"><rect x="0.5" y="0.5" width="9" height="10" fill="url(#gdi)" stroke="url(#gdb)"/><path d="M2 2.5h4M2 4.5h6M2 6.5h6" stroke="#6a6a6a" stroke-width="1"/><path d="M2 8.5h4" stroke="#2a2a2a" stroke-width="1"/></svg>
<div style="position:absolute;left:93.00px;top:739.69px;font-size:11px;line-height:11px;color:#262626;white-space:nowrap;">2.1.7</div>
<div style="position:absolute;left:171.00px;top:739.69px;font-size:11px;line-height:11px;color:#262626;white-space:nowrap;">#10</div>
<div style="position:absolute;left:293.00px;top:739.69px;font-size:11px;line-height:11px;color:#262626;white-space:nowrap;">Test a graph which has no edges</div>
<div style="position:absolute;left:167px;top:733px;width:1px;height:24px;background:#dcdcdc;"></div>
<div style="position:absolute;left:289px;top:733px;width:1px;height:24px;background:#dcdcdc;"></div>
<div style="position:absolute;left:486px;top:733px;width:1px;height:24px;background:#dcdcdc;"></div>
<div style="position:absolute;left:489.5px;top:735.1px;width:158.6px;height:18px;background:#48a41e;border:1.25px solid #1b2a12;border-radius:4.5px;"></div>
<div style="position:absolute;left:67px;top:756px;width:584px;height:24px;border:1px solid #dcdcdc;background:#fff;"></div>
<svg style="position:absolute;left:74px;top:762px;" width="10" height="11" viewBox="0 0 10 11"><rect x="0.5" y="0.5" width="9" height="10" fill="url(#gdi)" stroke="url(#gdb)"/><path d="M2 2.5h4M2 4.5h6M2 6.5h6" stroke="#6a6a6a" stroke-width="1"/><path d="M2 8.5h4" stroke="#2a2a2a" stroke-width="1"/></svg>
<div style="position:absolute;left:93.00px;top:762.69px;font-size:11px;line-height:11px;color:#262626;white-space:nowrap;">2.1.8</div>
<div style="position:absolute;left:171.00px;top:762.69px;font-size:11px;line-height:11px;color:#262626;white-space:nowrap;">#12</div>
<div style="position:absolute;left:293.00px;top:762.69px;font-size:11px;line-height:11px;color:#262626;white-space:nowrap;">Test a graph starting from a node wit...</div>
<div style="position:absolute;left:167px;top:756px;width:1px;height:24px;background:#dcdcdc;"></div>
<div style="position:absolute;left:289px;top:756px;width:1px;height:24px;background:#dcdcdc;"></div>
<div style="position:absolute;left:486px;top:756px;width:1px;height:24px;background:#dcdcdc;"></div>
<div style="position:absolute;left:489.5px;top:758.1px;width:158.6px;height:18px;background:#48a41e;border:1.25px solid #1b2a12;border-radius:4.5px;"></div>
<div style="position:absolute;left:67px;top:779px;width:584px;height:24px;border:1px solid #dcdcdc;background:#fff;"></div>
<svg style="position:absolute;left:74px;top:785px;" width="10" height="11" viewBox="0 0 10 11"><rect x="0.5" y="0.5" width="9" height="10" fill="url(#gdi)" stroke="url(#gdb)"/><path d="M2 2.5h4M2 4.5h6M2 6.5h6" stroke="#6a6a6a" stroke-width="1"/><path d="M2 8.5h4" stroke="#2a2a2a" stroke-width="1"/></svg>
<div style="position:absolute;left:93.00px;top:785.69px;font-size:11px;line-height:11px;color:#262626;white-space:nowrap;">2.1.9</div>
<div style="position:absolute;left:171.00px;top:785.69px;font-size:11px;line-height:11px;color:#262626;white-space:nowrap;">#13</div>
<div style="position:absolute;left:293.00px;top:785.69px;font-size:11px;line-height:11px;color:#262626;white-space:nowrap;">Test a graph ending on a node with ...</div>
<div style="position:absolute;left:167px;top:779px;width:1px;height:24px;background:#dcdcdc;"></div>
<div style="position:absolute;left:289px;top:779px;width:1px;height:24px;background:#dcdcdc;"></div>
<div style="position:absolute;left:486px;top:779px;width:1px;height:24px;background:#dcdcdc;"></div>
<div style="position:absolute;left:489.5px;top:781.1px;width:158.6px;height:18px;background:#48a41e;border:1.25px solid #1b2a12;border-radius:4.5px;"></div>
<div style="position:absolute;left:51px;top:802px;width:600px;height:24px;border:1px solid #dcdcdc;background:#fff;"></div>
<svg style="position:absolute;left:58px;top:808px;" width="10" height="11" viewBox="0 0 10 11"><rect x="0.5" y="0.5" width="9" height="10" fill="url(#gdi)" stroke="url(#gdb)"/><path d="M2 2.5h4M2 4.5h6M2 6.5h6" stroke="#6a6a6a" stroke-width="1"/><path d="M2 8.5h4" stroke="#2a2a2a" stroke-width="1"/></svg>
<div style="position:absolute;left:77.00px;top:808.69px;font-size:11px;line-height:11px;color:#262626;white-space:nowrap;">2.2</div>
<div style="position:absolute;left:171.00px;top:808.69px;font-size:11px;line-height:11px;color:#262626;white-space:nowrap;">#15</div>
<div style="position:absolute;left:293.00px;top:808.69px;font-size:11px;line-height:11px;color:#262626;white-space:nowrap;">Tests for invalid conditions</div>
<svg style="position:absolute;left:38.5px;top:809px;" width="10" height="7" viewBox="0 0 10 7"><path d="M1 1.2 L5 5.2 L9 1.2" fill="none" stroke="#333" stroke-width="1.8"/></svg>
<div style="position:absolute;left:167px;top:802px;width:1px;height:24px;background:#dcdcdc;"></div>
<div style="position:absolute;left:289px;top:802px;width:1px;height:24px;background:#dcdcdc;"></div>
<div style="position:absolute;left:486px;top:802px;width:1px;height:24px;background:#dcdcdc;"></div>
<div style="position:absolute;left:489.5px;top:804.1px;width:158.6px;height:18px;background:#48a41e;border:1.25px solid #1b2a12;border-radius:4.5px;"></div>
<div style="position:absolute;left:67px;top:825px;width:584px;height:24px;border:1px solid #dcdcdc;background:#fff;"></div>
<svg style="position:absolute;left:74px;top:831px;" width="10" height="11" viewBox="0 0 10 11"><rect x="0.5" y="0.5" width="9" height="10" fill="url(#gdi)" stroke="url(#gdb)"/><path d="M2 2.5h4M2 4.5h6M2 6.5h6" stroke="#6a6a6a" stroke-width="1"/><path d="M2 8.5h4" stroke="#2a2a2a" stroke-width="1"/></svg>
<div style="position:absolute;left:93.00px;top:831.69px;font-size:11px;line-height:11px;color:#262626;white-space:nowrap;">2.2.1</div>
<div style="position:absolute;left:171.00px;top:831.69px;font-size:11px;line-height:11px;color:#262626;white-space:nowrap;">#18</div>
<div style="position:absolute;left:293.00px;top:831.69px;font-size:11px;line-height:11px;color:#262626;white-space:nowrap;">Test with invalid startIdx &gt; N</div>
<div style="position:absolute;left:167px;top:825px;width:1px;height:24px;background:#dcdcdc;"></div>
<div style="position:absolute;left:289px;top:825px;width:1px;height:24px;background:#dcdcdc;"></div>
<div style="position:absolute;left:486px;top:825px;width:1px;height:24px;background:#dcdcdc;"></div>
<div style="position:absolute;left:489.5px;top:827.1px;width:158.6px;height:18px;background:#48a41e;border:1.25px solid #1b2a12;border-radius:4.5px;"></div>
<div style="position:absolute;left:67px;top:848px;width:584px;height:24px;border:1px solid #dcdcdc;background:#fff;"></div>
<svg style="position:absolute;left:74px;top:854px;" width="10" height="11" viewBox="0 0 10 11"><rect x="0.5" y="0.5" width="9" height="10" fill="url(#gdi)" stroke="url(#gdb)"/><path d="M2 2.5h4M2 4.5h6M2 6.5h6" stroke="#6a6a6a" stroke-width="1"/><path d="M2 8.5h4" stroke="#2a2a2a" stroke-width="1"/></svg>
<div style="position:absolute;left:93.00px;top:854.69px;font-size:11px;line-height:11px;color:#262626;white-space:nowrap;">2.2.2</div>
<div style="position:absolute;left:171.00px;top:854.69px;font-size:11px;line-height:11px;color:#262626;white-space:nowrap;">#14</div>
<div style="position:absolute;left:293.00px;top:854.69px;font-size:11px;line-height:11px;color:#262626;white-space:nowrap;">Test with invalid startIdx &lt;1</div>
<div style="position:absolute;left:167px;top:848px;width:1px;height:24px;background:#dcdcdc;"></div>
<div style="position:absolute;left:289px;top:848px;width:1px;height:24px;background:#dcdcdc;"></div>
<div style="position:absolute;left:486px;top:848px;width:1px;height:24px;background:#dcdcdc;"></div>
<div style="position:absolute;left:489.5px;top:850.1px;width:158.6px;height:18px;background:#48a41e;border:1.25px solid #1b2a12;border-radius:4.5px;"></div>
<div style="position:absolute;left:67px;top:871px;width:584px;height:24px;border:1px solid #dcdcdc;background:#fff;"></div>
<svg style="position:absolute;left:74px;top:877px;" width="10" height="11" viewBox="0 0 10 11"><rect x="0.5" y="0.5" width="9" height="10" fill="url(#gdi)" stroke="url(#gdb)"/><path d="M2 2.5h4M2 4.5h6M2 6.5h6" stroke="#6a6a6a" stroke-width="1"/><path d="M2 8.5h4" stroke="#2a2a2a" stroke-width="1"/></svg>
<div style="position:absolute;left:93.00px;top:877.69px;font-size:11px;line-height:11px;color:#262626;white-space:nowrap;">2.2.3</div>
<div style="position:absolute;left:171.00px;top:877.69px;font-size:11px;line-height:11px;color:#262626;white-space:nowrap;">#20</div>
<div style="position:absolute;left:293.00px;top:877.69px;font-size:11px;line-height:11px;color:#262626;white-space:nowrap;">Test with invalid endIdx &gt; N</div>
<div style="position:absolute;left:167px;top:871px;width:1px;height:24px;background:#dcdcdc;"></div>
<div style="position:absolute;left:289px;top:871px;width:1px;height:24px;background:#dcdcdc;"></div>
<div style="position:absolute;left:486px;top:871px;width:1px;height:24px;background:#dcdcdc;"></div>
<div style="position:absolute;left:489.5px;top:873.1px;width:158.6px;height:18px;background:#48a41e;border:1.25px solid #1b2a12;border-radius:4.5px;"></div>
<div style="position:absolute;left:67px;top:894px;width:584px;height:24px;border:1px solid #dcdcdc;background:#fff;"></div>
<svg style="position:absolute;left:74px;top:900px;" width="10" height="11" viewBox="0 0 10 11"><rect x="0.5" y="0.5" width="9" height="10" fill="url(#gdi)" stroke="url(#gdb)"/><path d="M2 2.5h4M2 4.5h6M2 6.5h6" stroke="#6a6a6a" stroke-width="1"/><path d="M2 8.5h4" stroke="#2a2a2a" stroke-width="1"/></svg>
<div style="position:absolute;left:93.00px;top:900.69px;font-size:11px;line-height:11px;color:#262626;white-space:nowrap;">2.2.4</div>
<div style="position:absolute;left:171.00px;top:900.69px;font-size:11px;line-height:11px;color:#262626;white-space:nowrap;">#21</div>
<div style="position:absolute;left:293.00px;top:900.69px;font-size:11px;line-height:11px;color:#262626;white-space:nowrap;">Test with invalid endIdx &lt; 1</div>
<div style="position:absolute;left:167px;top:894px;width:1px;height:24px;background:#dcdcdc;"></div>
<div style="position:absolute;left:289px;top:894px;width:1px;height:24px;background:#dcdcdc;"></div>
<div style="position:absolute;left:486px;top:894px;width:1px;height:24px;background:#dcdcdc;"></div>
<div style="position:absolute;left:489.5px;top:896.1px;width:158.6px;height:18px;background:#48a41e;border:1.25px solid #1b2a12;border-radius:4.5px;"></div>
<div style="position:absolute;left:67px;top:917px;width:584px;height:24px;border:1px solid #dcdcdc;background:#fff;"></div>
<svg style="position:absolute;left:74px;top:923px;" width="10" height="11" viewBox="0 0 10 11"><rect x="0.5" y="0.5" width="9" height="10" fill="url(#gdi)" stroke="url(#gdb)"/><path d="M2 2.5h4M2 4.5h6M2 6.5h6" stroke="#6a6a6a" stroke-width="1"/><path d="M2 8.5h4" stroke="#2a2a2a" stroke-width="1"/></svg>
<div style="position:absolute;left:93.00px;top:923.69px;font-size:11px;line-height:11px;color:#262626;white-space:nowrap;">2.2.5</div>
<div style="position:absolute;left:171.00px;top:923.69px;font-size:11px;line-height:11px;color:#262626;white-space:nowrap;">#11</div>
<div style="position:absolute;left:293.00px;top:923.69px;font-size:11px;line-height:11px;color:#262626;white-space:nowrap;">Test a degenerate graph without nod...</div>
<div style="position:absolute;left:167px;top:917px;width:1px;height:24px;background:#dcdcdc;"></div>
<div style="position:absolute;left:289px;top:917px;width:1px;height:24px;background:#dcdcdc;"></div>
<div style="position:absolute;left:486px;top:917px;width:1px;height:24px;background:#dcdcdc;"></div>
<div style="position:absolute;left:489.5px;top:919.1px;width:158.6px;height:18px;background:#48a41e;border:1.25px solid #1b2a12;border-radius:4.5px;"></div>
<div style="position:absolute;left:656px;top:152px;width:4px;height:802px;background:#f0f0f0;"></div>
<div style="position:absolute;left:656px;top:152px;width:1px;height:802px;background:#fbf7f5;"></div>
<div style="position:absolute;left:660px;top:152px;width:474px;height:802px;background:#fafafa;"></div>
<div style="position:absolute;left:660px;top:152px;width:474px;height:29px;border:1px solid #a0a0a0;border-top:none;background:#fafafa;"></div>
<div style="position:absolute;left:671.00px;top:161.69px;font-size:11px;line-height:11px;color:#000;white-space:nowrap;">Requirement: #8</div>
<div style="position:absolute;left:664px;top:185px;width:466px;height:1px;background:#dcdcdc;"></div>
<div style="position:absolute;left:664px;top:187.5px;width:466px;height:18.5px;background:#fff;"></div>
<div style="position:absolute;left:664px;top:208px;width:466px;height:1px;background:#dcdcdc;"></div>
<svg style="position:absolute;left:667px;top:194.0px;" width="9" height="6" viewBox="0 0 9 6"><path d="M0 0 H9 L4.5 5.3Z" fill="#000"/></svg>
<div style="position:absolute;left:680.50px;top:191.69px;font-size:12.3px;line-height:12.3px;color:#000;white-space:nowrap;font-weight:bold;">Properties</div>
<div style="position:absolute;left:668.50px;top:219.69px;font-size:11px;line-height:11px;color:#000;white-space:nowrap;">Type:</div>
<div style="position:absolute;left:732px;top:215px;width:93px;height:20px;background:#e1e1e1;border:1px solid #adadad;"></div>
<div style="position:absolute;left:736.00px;top:221.09px;font-size:11px;line-height:11px;color:#000;white-space:nowrap;">Container</div>
<svg style="position:absolute;left:811.5px;top:223px;" width="8" height="4" viewBox="0 0 8 4"><path d="M0 0 H8 L4 4.2Z" fill="#000"/></svg>
<div style="position:absolute;left:668.50px;top:242.69px;font-size:11px;line-height:11px;color:#000;white-space:nowrap;">Index:</div>
<div style="position:absolute;left:730.50px;top:242.69px;font-size:11px;line-height:11px;color:#000;white-space:nowrap;">2.2</div>
<div style="position:absolute;left:668.50px;top:265.19px;font-size:11px;line-height:11px;color:#000;white-space:nowrap;">Custom ID:</div>
<div style="position:absolute;left:732px;top:260px;width:393px;height:20px;background:#fff;border:1px solid #7a7a7a;"></div>
<div style="position:absolute;left:736.00px;top:265.69px;font-size:11px;line-height:11px;color:#9a9a9a;white-space:nowrap;">#8</div>
<div style="position:absolute;left:668.50px;top:291.19px;font-size:11px;line-height:11px;color:#000;white-space:nowrap;">Summary:</div>
<div style="position:absolute;left:732px;top:286px;width:393px;height:20px;background:#fff;border:1px solid #7a7a7a;"></div>
<div style="position:absolute;left:736.00px;top:291.69px;font-size:11px;line-height:11px;color:#000;white-space:nowrap;">Exceptional conditions</div>
<div style="position:absolute;left:666px;top:334px;width:460px;height:253px;border:1px solid #d9d9d9;background:#fafafa;"></div>
<div style="position:absolute;left:745px;top:316px;width:66px;height:19px;background:#ebebeb;border:1px solid #d9d9d9;"></div>
<div style="position:absolute;left:666px;top:314px;width:80px;height:21px;background:#fafafa;border:1px solid #d9d9d9;border-bottom:none;"></div>
<div style="position:absolute;left:677.00px;top:320.69px;font-size:11px;line-height:11px;color:#000;white-space:nowrap;">Description</div>
<div style="position:absolute;left:756.00px;top:320.69px;font-size:11px;line-height:11px;color:#000;white-space:nowrap;">Rationale</div>
<svg style="position:absolute;left:675px;top:343px;" width="17" height="17" viewBox="0 0 17 17"><path d="M0.5 0.5 H8 L11.5 4 V14.5 H0.5Z" fill="#f4f8fc" stroke="#8a9ab0"/><text x="1.5" y="11" font-family="Liberation Sans" font-weight="bold" font-size="8" fill="#2a6ad0">W</text><path d="M8 15 L15.5 7.5" stroke="#a06020" stroke-width="2.6"/><path d="M8 15 L15.5 7.5" stroke="#f0b060" stroke-width="1.2"/><path d="M7 16.5 L8.5 14.5" stroke="#333" stroke-width="1.2"/></svg>
<div style="position:absolute;left:700px;top:341px;width:1px;height:19px;background:#d0d0d0;"></div>
<div style="position:absolute;left:705px;top:341px;width:58px;height:20px;background:#fff;border:1px solid #7a7a7a;"></div>
<div style="position:absolute;left:711.50px;top:347.27px;font-size:11.5px;line-height:11.5px;color:#000;white-space:nowrap;">Arial</div>
<svg style="position:absolute;left:748px;top:349px;" width="9" height="6" viewBox="0 0 9 6"><path d="M0.5 0.5 L4.5 4.5 L8.5 0.5" fill="none" stroke="#333" stroke-width="1.1"/></svg>
<div style="position:absolute;left:764px;top:341px;width:45px;height:20px;background:#fff;border:1px solid #7a7a7a;"></div>
<div style="position:absolute;left:770.50px;top:347.27px;font-size:11.5px;line-height:11.5px;color:#000;white-space:nowrap;">10</div>
<svg style="position:absolute;left:795px;top:349px;" width="9" height="6" viewBox="0 0 9 6"><path d="M0.5 0.5 L4.5 4.5 L8.5 0.5" fill="none" stroke="#333" stroke-width="1.1"/></svg>
<div style="position:absolute;left:815px;top:343px;width:16px;height:16px;background:#eceef0;"></div>
<div style="position:absolute;left:843px;top:343px;width:16px;height:16px;background:#eceef0;"></div>
<div style="position:absolute;left:871px;top:343px;width:16px;height:16px;background:#eceef0;"></div>
<div style="position:absolute;left:813.00px;top:345.00px;width:20px;text-align:center;font-size:13px;line-height:13px;color:#000;white-space:nowrap;font-family:'Liberation Serif',serif;font-weight:bold;">B</div>
<svg style="position:absolute;left:843px;top:343px;" width="16" height="16" viewBox="0 0 16 16"><path d="M9.2 4 H13.5 M3.5 12.3 H7.8 M11.5 4 L5.6 12.3" stroke="#111" stroke-width="1.6" fill="none"/></svg>
<div style="position:absolute;left:869.00px;top:344.77px;width:20px;text-align:center;font-size:11.5px;line-height:11.5px;color:#000;white-space:nowrap;font-family:'Liberation Serif',serif;font-weight:bold;"><u>U</u></div>
<div style="position:absolute;left:899px;top:343px;width:16px;height:16px;background:#000;"></div>
<div style="position:absolute;left:924px;top:341px;width:1px;height:19px;background:#d0d0d0;"></div>
<div style="position:absolute;left:929px;top:338px;width:27px;height:24px;background:#cce8ff;border:1px solid #99d1ff;"></div>
<svg style="position:absolute;left:935px;top:343px;" width="14" height="15" viewBox="0 0 14 15"><path d="M0 1.5 h14" stroke="#000" stroke-width="1.2"/><path d="M0 4.5 h9" stroke="#000" stroke-width="1.2"/><path d="M0 7.5 h14" stroke="#000" stroke-width="1.2"/><path d="M0 10.5 h9" stroke="#000" stroke-width="1.2"/><path d="M0 13.5 h14" stroke="#000" stroke-width="1.2"/></svg>
<div style="position:absolute;left:962px;top:343px;width:16px;height:16px;background:#ececec;"></div>
<svg style="position:absolute;left:963px;top:343px;" width="14" height="15" viewBox="0 0 14 15"><path d="M0.0 1.5 h14" stroke="#000" stroke-width="1.2"/><path d="M2.5 4.5 h9" stroke="#000" stroke-width="1.2"/><path d="M0.0 7.5 h14" stroke="#000" stroke-width="1.2"/><path d="M2.5 10.5 h9" stroke="#000" stroke-width="1.2"/><path d="M0.0 13.5 h14" stroke="#000" stroke-width="1.2"/></svg>
<div style="position:absolute;left:990px;top:343px;width:16px;height:16px;background:#ececec;"></div>
<svg style="position:absolute;left:991px;top:343px;" width="14" height="15" viewBox="0 0 14 15"><path d="M0 1.5 h14" stroke="#000" stroke-width="1.2"/><path d="M5 4.5 h9" stroke="#000" stroke-width="1.2"/><path d="M0 7.5 h14" stroke="#000" stroke-width="1.2"/><path d="M5 10.5 h9" stroke="#000" stroke-width="1.2"/><path d="M0 13.5 h14" stroke="#000" stroke-width="1.2"/></svg>
<div style="position:absolute;left:1018px;top:343px;width:16px;height:16px;background:#ececec;"></div>
<svg style="position:absolute;left:1019px;top:343px;" width="14" height="15" viewBox="0 0 14 15"><path d="M0 1.5 h14" stroke="#000" stroke-width="1.2"/><path d="M0 4.5 h14" stroke="#000" stroke-width="1.2"/><path d="M0 7.5 h14" stroke="#000" stroke-width="1.2"/><path d="M0 10.5 h14" stroke="#000" stroke-width="1.2"/><path d="M0 13.5 h14" stroke="#000" stroke-width="1.2"/></svg>
<div style="position:absolute;left:1041px;top:341px;width:46px;height:20px;background:#dcdcdc;border:1px solid #c4c4c4;"></div>
<div style="position:absolute;left:1047.00px;top:346.23px;font-size:8px;line-height:8px;color:#aaa;white-space:nowrap;">...</div>
<svg style="position:absolute;left:1072px;top:349px;" width="9" height="5" viewBox="0 0 9 5"><path d="M0 0 H9 L4.5 5Z" fill="#000"/></svg>
<div style="position:absolute;left:1091px;top:341px;width:1px;height:19px;background:#d0d0d0;"></div>
<svg style="position:absolute;left:1100px;top:344px;" width="16" height="14" viewBox="0 0 16 14"><rect x="0.5" y="0.5" width="15" height="13" fill="#cfe6f5" stroke="#666"/><path d="M1 13 L1 9 Q4 5 7 9 Q10 6 15 10 V13Z" fill="#3ea23a"/></svg>
<div style="position:absolute;left:670px;top:364px;width:452px;height:219px;background:#fff;border:1px solid #7a7a7a;"></div>
<div style="position:absolute;left:675.10px;top:370.00px;font-size:13px;line-height:13px;color:#1a1a1a;white-space:nowrap;">The following exceptional cases should be processed in the order specified</div>
<div style="position:absolute;left:675.10px;top:385.00px;font-size:13px;line-height:13px;color:#1a1a1a;white-space:nowrap;">where negative value error codes are returned.</div>
<div style="position:absolute;left:675.10px;top:415.00px;font-size:13px;line-height:13px;color:#1a1a1a;white-space:nowrap;">The function should be designed so that it never throws an error and always</div>
<div style="position:absolute;left:675.10px;top:430.00px;font-size:13px;line-height:13px;color:#1a1a1a;white-space:nowrap;">returns a non-negative number to indicate a path or a negative number to</div>
<div style="position:absolute;left:675.10px;top:445.00px;font-size:13px;line-height:13px;color:#1a1a1a;white-space:nowrap;">indicate some abnormal condition.</div>
<div style="position:absolute;left:668.50px;top:601.69px;font-size:11px;line-height:11px;color:#000;white-space:nowrap;">Keywords:</div>
<div style="position:absolute;left:727px;top:597px;width:398px;height:20px;background:#fff;border:1px solid #7a7a7a;"></div>
<svg style="position:absolute;left:669px;top:635px;" width="9" height="6" viewBox="0 0 9 6"><path d="M0 0 H9 L4.5 5.5Z" fill="#000"/></svg>
<div style="position:absolute;left:682.00px;top:632.69px;font-size:11px;line-height:11px;color:#000;white-space:nowrap;">Revision information:</div>
<div style="position:absolute;left:682.00px;top:652.19px;font-size:11px;line-height:11px;color:#000;white-space:nowrap;">SID:</div>
<div style="position:absolute;left:749.00px;top:652.19px;font-size:11px;line-height:11px;color:#000;white-space:nowrap;">8</div>
<div style="position:absolute;left:682.00px;top:671.39px;font-size:11px;line-height:11px;color:#000;white-space:nowrap;">Revision:</div>
<div style="position:absolute;left:749.00px;top:671.39px;font-size:11px;line-height:11px;color:#000;white-space:nowrap;">11</div>
<div style="position:absolute;left:682.00px;top:690.59px;font-size:11px;line-height:11px;color:#000;white-space:nowrap;">Created by:</div>
<div style="position:absolute;left:749.00px;top:690.59px;font-size:11px;line-height:11px;color:#000;white-space:nowrap;">zliu</div>
<div style="position:absolute;left:682.00px;top:709.79px;font-size:11px;line-height:11px;color:#000;white-space:nowrap;">Created on:</div>
<div style="position:absolute;left:749.00px;top:709.79px;font-size:11px;line-height:11px;color:#000;white-space:nowrap;">17-Aug-2021 00:09:42</div>
<div style="position:absolute;left:682.00px;top:728.99px;font-size:11px;line-height:11px;color:#000;white-space:nowrap;">Modified by:</div>
<div style="position:absolute;left:749.00px;top:728.99px;font-size:11px;line-height:11px;color:#000;white-space:nowrap;">zliu</div>
<div style="position:absolute;left:682.00px;top:748.19px;font-size:11px;line-height:11px;color:#000;white-space:nowrap;">Modified on:</div>
<div style="position:absolute;left:749.00px;top:748.19px;font-size:11px;line-height:11px;color:#000;white-space:nowrap;">16-Dec-2021 15:07:54</div>
<div style="position:absolute;left:664px;top:767px;width:466px;height:1px;background:#dcdcdc;"></div>
<div style="position:absolute;left:664px;top:769.5px;width:466px;height:18.5px;background:#fff;"></div>
<div style="position:absolute;left:664px;top:790px;width:466px;height:1px;background:#dcdcdc;"></div>
<svg style="position:absolute;left:667px;top:776.0px;" width="9" height="6" viewBox="0 0 9 6"><path d="M0 0 H9 L4.5 5.3Z" fill="#000"/></svg>
<div style="position:absolute;left:680.50px;top:773.69px;font-size:12.3px;line-height:12.3px;color:#000;white-space:nowrap;font-weight:bold;">Custom Attributes</div>
<div style="position:absolute;left:666.00px;top:800.19px;font-size:11px;line-height:11px;color:#000;white-space:nowrap;">Priority:</div>
<div style="position:absolute;left:712px;top:795px;width:65px;height:20px;background:#e1e1e1;border:1px solid #adadad;"></div>
<div style="position:absolute;left:716.00px;top:800.69px;font-size:11px;line-height:11px;color:#000;white-space:nowrap;">High</div>
<svg style="position:absolute;left:763.5px;top:803.3px;" width="8" height="4" viewBox="0 0 8 4"><path d="M0 0 H8 L4 4.2Z" fill="#000"/></svg>
<div style="position:absolute;left:664px;top:823px;width:466px;height:1px;background:#dcdcdc;"></div>
<div style="position:absolute;left:664px;top:825.5px;width:466px;height:18.5px;background:#fff;"></div>
<div style="position:absolute;left:664px;top:846px;width:466px;height:1px;background:#dcdcdc;"></div>
<svg style="position:absolute;left:667px;top:832.0px;" width="9" height="6" viewBox="0 0 9 6"><path d="M0 0 H9 L4.5 5.3Z" fill="#000"/></svg>
<div style="position:absolute;left:680.50px;top:829.69px;font-size:12.3px;line-height:12.3px;color:#000;white-space:nowrap;font-weight:bold;">Links</div>
<div style="position:absolute;left:666px;top:851px;width:462px;height:67px;background:#fff;"></div>
<div style="position:absolute;left:674.00px;top:860.00px;font-size:13px;line-height:13px;color:#222;white-space:nowrap;">No links</div>
<div style="position:absolute;left:664px;top:926px;width:466px;height:1px;background:#dcdcdc;"></div>
<div style="position:absolute;left:664px;top:928.5px;width:466px;height:18.5px;background:#fff;"></div>
<div style="position:absolute;left:664px;top:949px;width:466px;height:1px;background:#dcdcdc;"></div>
<svg style="position:absolute;left:668px;top:932px;" width="6" height="10" viewBox="0 0 6 10"><path d="M0 0 V10 L5.5 5Z" fill="#000"/></svg>
<div style="position:absolute;left:680.50px;top:932.69px;font-size:12.3px;line-height:12.3px;color:#000;white-space:nowrap;font-weight:bold;">Comments</div>
<div style="position:absolute;left:1129px;top:971px;width:2px;height:2px;background:#b0b0b0;"></div>
<div style="position:absolute;left:1126px;top:971px;width:2px;height:2px;background:#b0b0b0;"></div>
<div style="position:absolute;left:1129px;top:968px;width:2px;height:2px;background:#b0b0b0;"></div>
<div style="position:absolute;left:1123px;top:971px;width:2px;height:2px;background:#b0b0b0;"></div>
<div style="position:absolute;left:1126px;top:968px;width:2px;height:2px;background:#b0b0b0;"></div>
<div style="position:absolute;left:1129px;top:965px;width:2px;height:2px;background:#b0b0b0;"></div>
<svg width="0" height="0" style="position:absolute"><defs>
<linearGradient id="gdoc" x1="0" y1="0" x2="1" y2="1"><stop offset="0" stop-color="#fbfcfd"/><stop offset="1" stop-color="#cdd8e4"/></linearGradient>
<linearGradient id="gplusO" x1="0" y1="0" x2="0" y2="1"><stop offset="0" stop-color="#fffbe0"/><stop offset="1" stop-color="#f0b040"/></linearGradient>
<linearGradient id="gplusG" x1="0" y1="0" x2="0" y2="1"><stop offset="0" stop-color="#f0ffe0"/><stop offset="1" stop-color="#a8d860"/></linearGradient>
<linearGradient id="gfold" x1="0" y1="0" x2="1" y2="1"><stop offset="0" stop-color="#fffbe8"/><stop offset="1" stop-color="#f2c870"/></linearGradient>
<linearGradient id="gdash" x1="0" y1="0" x2="0" y2="1"><stop offset="0" stop-color="#9ad88a"/><stop offset="1" stop-color="#6cc060"/></linearGradient>
<radialGradient id="glens" cx="0.4" cy="0.4" r="0.6"><stop offset="0" stop-color="#ffffff"/><stop offset="1" stop-color="#b8cde0"/></radialGradient>
</defs></svg>
<svg style="position:absolute;left:41px;top:70px;" width="25" height="25" viewBox="0 0 25 25"><path d="M0.5 0.5 H13 L17.5 5 V20.5 H0.5Z" fill="url(#gdoc)" stroke="#8a8a8a"/><path d="M13 0.5 V5 H17.5" fill="#fff" stroke="#9a9a9a"/><path d="M3 1.5 V8 Q4 10 5 8 V2.5" fill="none" stroke="#8a8a8a" stroke-width="1.2"/><path d="M15.5 11.5 h4 v4 h4 v4 h-4 v4 h-4 v-4 h-4 v-4 h4Z" fill="url(#gplusO)" stroke="#d0801c" stroke-width="1.1"/></svg>
<svg style="position:absolute;left:111px;top:72px;" width="26" height="20" viewBox="0 0 26 20"><path d="M1.5 1.5 H9 L11 3.5 H22.5 V18.5 H3.5Z" fill="#f4d9a0" stroke="#c88838"/><path d="M1.5 4.5 H20.5 L22.5 18.5 H3.5Z" fill="url(#gfold)" stroke="#c07828"/></svg>
<svg style="position:absolute;left:149px;top:67px;" width="16" height="16" viewBox="0 0 16 16"><rect x="0.5" y="0.5" width="15" height="15" rx="1" fill="#4a4a4a" stroke="#2a2a2a"/><rect x="3" y="1.5" width="10" height="5" fill="#e8e8e8"/><path d="M4.5 3h6M4.5 4.8h4" stroke="#777" stroke-width="0.8"/><rect x="4.5" y="10" width="7" height="6" fill="#e0e0e0"/><rect x="6" y="11" width="2" height="5" fill="#555"/></svg>
<svg style="position:absolute;left:211.6px;top:74px;" width="8" height="5" viewBox="0 0 8 5"><path d="M0 0 H7.6 L3.8 4Z" fill="#555"/></svg>
<svg style="position:absolute;left:149px;top:91px;" width="16" height="16" viewBox="0 0 16 16"><rect x="0.5" y="9.5" width="15" height="6" fill="#f8f8f8" stroke="#666"/><rect x="2" y="11.5" width="12" height="2" fill="#c8c8c8"/><path d="M6 0.5 H10 V6 H13 L8 11.5 L3 6 H6Z" fill="#7cc040" stroke="#3a8a1a"/></svg>
<svg style="position:absolute;left:149px;top:115px;" width="17" height="17" viewBox="0 0 17 17"><path d="M0.5 0.5 H8 L11.5 4 V14.5 H0.5Z" fill="#f2f4f6" stroke="#c8c8c8"/><path d="M2.5 1.5 V6" stroke="#ccc" stroke-width="1.2"/><path d="M9 9 L16 16 M16 9 L9 16" stroke="#b8cde0" stroke-width="2.4"/></svg>
<svg style="position:absolute;left:264px;top:70px;" width="25" height="25" viewBox="0 0 25 25"><rect x="0.5" y="0.5" width="16.5" height="20.5" fill="#fff" stroke="#555"/><path d="M2 4.5h6M2 8.5h9M2 12.5h10M2 16.5h7" stroke="#4a4a4a" stroke-width="1.1"/><path d="M14.5 11.5 h4 v4 h4.5 v4 h-4.5 v4 h-4 v-4 h-4 v-4 h4Z" fill="url(#gplusG)" stroke="#3a8a1a" stroke-width="1.3"/></svg>
<svg style="position:absolute;left:327px;top:66px;" width="17" height="17" viewBox="0 0 17 17"><rect x="0.5" y="0.5" width="10.5" height="12.5" fill="#fff" stroke="#444" stroke-width="1.1"/><path d="M2 3.5h3M2 6.5h4M2 9.5h4" stroke="#444" stroke-width="1.1"/><path d="M7.5 9.5 h8.5" stroke="#333" stroke-width="1.6"/><path d="M9.5 7.5 h4.5 v1.5 h-4.5z" fill="#333"/><path d="M8.5 10.5 L9.2 16.3 H14.5 L15.2 10.5Z" fill="#fff" stroke="#333" stroke-width="1.1"/><path d="M11 11.5v3.5M12.8 11.5v3.5" stroke="#555" stroke-width="0.8"/></svg>
<svg style="position:absolute;left:327px;top:91px;" width="16" height="16" viewBox="0 0 16 16"><rect x="0.5" y="0.5" width="15" height="15" fill="#f2f2f2" stroke="#cfcfcf"/><path d="M3 3.5h10M9 6.5h4M9 9.5h4M3 12.5h10" stroke="#c4c4c4" stroke-width="1"/><path d="M2.5 7.8 H8.5 M5 5.3 L2.5 7.8 L5 10.3" fill="none" stroke="#8fb4d4" stroke-width="1.2"/></svg>
<svg style="position:absolute;left:327px;top:115px;" width="16" height="16" viewBox="0 0 16 16"><rect x="0.5" y="0.5" width="15" height="15" fill="#f2f2f2" stroke="#cfcfcf"/><path d="M3 3.5h10M9 6.5h4M9 9.5h4M3 12.5h10" stroke="#c4c4c4" stroke-width="1"/><path d="M2 7.8 H8 M5.5 5.3 L8 7.8 L5.5 10.3" fill="none" stroke="#8fb4d4" stroke-width="1.2"/></svg>
<svg style="position:absolute;left:359px;top:66px;" width="32" height="32" viewBox="0 0 32 32"><g transform="translate(16 16.3) rotate(-45) scale(1.0)"><path d="M-6.5 4.1 H-9.5 A4.1 4.1 0 0 1 -9.5 -4.1 H1.5 A4.1 4.1 0 0 1 5.6 0" fill="none" stroke="#222" stroke-width="3.2"/><path d="M6.5 -4.1 H9.5 A4.1 4.1 0 0 1 9.5 4.1 H-1.5 A4.1 4.1 0 0 1 -5.6 0" fill="none" stroke="#222" stroke-width="3.2"/></g><path d="M19 15.5 h3.5 v3.5 h3.5 v4 h-3.5 v3.5 h-3.5 v-3.5 h-3.5 v-4 h3.5Z" fill="url(#gplusG)" stroke="#2e8a1a" stroke-width="1.3"/></svg>
<svg style="position:absolute;left:385.6px;top:123px;" width="8" height="5" viewBox="0 0 8 5"><path d="M0 0 H7.6 L3.8 4Z" fill="#555"/></svg>
<svg style="position:absolute;left:311px;top:123px;" width="8" height="5" viewBox="0 0 8 5"><path d="M0 0 H7.6 L3.8 4Z" fill="#555"/></svg>
<svg style="position:absolute;left:402px;top:66px;" width="18" height="18" viewBox="0 0 18 18"><g transform="translate(7.5 8.5) rotate(-45) scale(0.6)"><path d="M-6.5 4.1 H-9.5 A4.1 4.1 0 0 1 -9.5 -4.1 H1.5 A4.1 4.1 0 0 1 5.6 0" fill="none" stroke="#c4c4c4" stroke-width="3.2"/><path d="M6.5 -4.1 H9.5 A4.1 4.1 0 0 1 9.5 4.1 H-1.5 A4.1 4.1 0 0 1 -5.6 0" fill="none" stroke="#c4c4c4" stroke-width="3.2"/></g><path d="M9.5 8.5 h8 M10.5 8.5 L11 16.5 H16 L16.5 8.5Z" fill="#eee" stroke="#c4c4c4"/><path d="M12.5 10.5v4.5M14 10.5v4.5" stroke="#ccc" stroke-width="0.8"/></svg>
<svg style="position:absolute;left:402px;top:90px;" width="18" height="18" viewBox="0 0 18 18"><g transform="translate(7.5 8.5) rotate(-45) scale(0.6)"><path d="M-6.5 4.1 H-9.5 A4.1 4.1 0 0 1 -9.5 -4.1 H1.5 A4.1 4.1 0 0 1 5.6 0" fill="none" stroke="#c4c4c4" stroke-width="3.2"/><path d="M6.5 -4.1 H9.5 A4.1 4.1 0 0 1 9.5 4.1 H-1.5 A4.1 4.1 0 0 1 -5.6 0" fill="none" stroke="#c4c4c4" stroke-width="3.2"/></g><path d="M8 12 L11 15 L17 8.5" fill="none" stroke="#b8e0a0" stroke-width="1.6"/></svg>
<svg style="position:absolute;left:403px;top:114px;" width="16" height="16" viewBox="0 0 16 16"><circle cx="8" cy="8" r="6.2" fill="#6a6a6a" stroke="#555" stroke-width="1" stroke-dasharray="2 1.2"/><circle cx="8" cy="8" r="5" fill="#888"/><circle cx="8" cy="8" r="1.8" fill="#fff"/></svg>
<svg style="position:absolute;left:460px;top:70px;" width="22" height="24" viewBox="0 0 22 24"><rect x="0.5" y="0.5" width="21" height="23" fill="#fff" stroke="#9a9a9a"/><path d="M4 5.5h10M4 8.5h14M4 11.5h14M4 14.5h14M4 17.5h14" stroke="#555" stroke-width="1"/></svg>
<svg style="position:absolute;left:518px;top:66px;" width="32" height="32" viewBox="0 0 32 32"><g transform="translate(16.5 16.3) rotate(-45) scale(1.0)"><path d="M-6.5 4.1 H-9.5 A4.1 4.1 0 0 1 -9.5 -4.1 H1.5 A4.1 4.1 0 0 1 5.6 0" fill="none" stroke="#262626" stroke-width="3.2"/><path d="M6.5 -4.1 H9.5 A4.1 4.1 0 0 1 9.5 4.1 H-1.5 A4.1 4.1 0 0 1 -5.6 0" fill="none" stroke="#262626" stroke-width="3.2"/></g></svg>
<svg style="position:absolute;left:559px;top:66px;" width="18" height="18" viewBox="0 0 18 18"><path d="M12 4.6 A5.6 5.6 0 1 0 12 13.4" fill="none" stroke="#28548c" stroke-width="4.4"/><path d="M12 4.6 A5.6 5.6 0 1 0 12 13.4" fill="none" stroke="#b4d2ee" stroke-width="2"/><path d="M11.5 1.2 L17.2 6.2 L10.2 7.8Z" fill="#8ab8e4" stroke="#28548c" stroke-width="1" stroke-linejoin="round"/></svg>
<div style="position:absolute;left:557px;top:88px;width:38px;height:22px;border:1px solid #4a90d9;border-radius:3px;background:#f5f5f5;"></div>
<svg style="position:absolute;left:560px;top:91px;" width="16" height="16" viewBox="0 0 16 16"><rect x="0.5" y="0.5" width="14" height="15" fill="#fff" stroke="#444"/><rect x="1" y="1" width="13.5" height="2" fill="#d8d8d8"/><rect x="1" y="3" width="4" height="12.5" fill="#e4e4e4"/><rect x="9.5" y="1" width="5" height="14.5" fill="#f0a040"/><path d="M1 3.5h13.5M1 7.5h13.5M1 11.5h13.5M5 3v12.5M9.5 1v14.5" stroke="#555" stroke-width="0.8"/><path d="M9.5 0.5 h5 v15 h-5" fill="none" stroke="#c06010"/></svg>
<svg style="position:absolute;left:582.3px;top:98px;" width="8" height="5" viewBox="0 0 8 5"><path d="M0 0 H7.6 L3.8 4Z" fill="#555"/></svg>
<svg style="position:absolute;left:560px;top:114px;" width="17" height="17" viewBox="0 0 17 17"><rect x="0.5" y="0.5" width="14" height="14" fill="#fff" stroke="#6a6a6a"/><rect x="1" y="1" width="4.5" height="13.5" fill="#dcdcdc"/><path d="M5.5 1v13.5" stroke="#6a6a6a"/><path d="M6.5 2h8" stroke="#888" stroke-width="1.4"/><path d="M7 5h1M7 7.5h1M7 10h1" stroke="#444" stroke-width="1.2"/><path d="M9 5h4.5M9 7.5h4.5M9 10h4.5" stroke="#555" stroke-width="1"/><ellipse cx="10.5" cy="13.8" rx="3.4" ry="2.2" fill="#e8e8e8" stroke="#555"/><circle cx="10.5" cy="13.8" r="1" fill="#555"/></svg>
<svg style="position:absolute;left:582.3px;top:122px;" width="8" height="5" viewBox="0 0 8 5"><path d="M0 0 H7.6 L3.8 4Z" fill="#555"/></svg>
<svg style="position:absolute;left:612px;top:69px;" width="26" height="26" viewBox="0 0 26 26"><path d="M14 15 L23 23" stroke="#1e3e66" stroke-width="3" stroke-linecap="round"/><circle cx="10" cy="10" r="8.3" fill="url(#glens)" stroke="#2c5a8c" stroke-width="1.6"/></svg>
<svg style="position:absolute;left:677px;top:69px;" width="27" height="26" viewBox="0 0 27 26"><rect x="1.5" y="1.5" width="21" height="21" fill="#fff" stroke="#555"/><path d="M1.5 8.5h21M1.5 15.5h21M8.5 1.5v21M15.5 1.5v21" stroke="#555"/><path d="M6 3.5 V6 H3.5 M4.5 5 L3.5 6 L4.5 7" fill="none" stroke="#333" stroke-width="0.9"/><rect x="14.5" y="12.5" width="10" height="12" fill="#f4f4f4" stroke="#555"/><path d="M16.5 16h6M16.5 18.5h6M16.5 21h6" stroke="#555"/></svg>
<svg style="position:absolute;left:749px;top:69px;" width="27" height="26" viewBox="0 0 27 26"><rect x="5.5" y="1" width="9" height="5" fill="#6a9ad0" stroke="#3a6aa0"/><path d="M10 6v3M5 9h10M5 9v3M15 9v3" stroke="#333"/><rect x="1" y="12.5" width="8.5" height="5" fill="#f8c060" stroke="#c08030"/><rect x="11.5" y="12.5" width="9" height="5" fill="#f8c060" stroke="#c08030"/><path d="M16 14 L25 19 L16 24.5Z" fill="#8ad060" stroke="#3a9a2a"/></svg>
<svg style="position:absolute;left:830px;top:70px;" width="24" height="24" viewBox="0 0 24 24"><rect x="0.6" y="0.6" width="22.8" height="22.8" rx="3.5" fill="url(#gdash)" stroke="#4c9c42" stroke-width="1.2"/><rect x="3" y="14" width="3.6" height="6" fill="#474747"/><rect x="9.2" y="4" width="4.6" height="16" fill="#474747"/><rect x="16.2" y="8" width="4" height="12" fill="#474747"/></svg>
<svg style="position:absolute;left:899px;top:69px;" width="28" height="26" viewBox="0 0 28 26"><rect x="2.5" y="15.5" width="21" height="9" fill="#fff" stroke="#555"/><rect x="4" y="18" width="18" height="4" fill="#cfcfcf"/><path d="M5.5 19.5 Q5.5 6 16.5 5.2 L16.7 1.5 L25.1 8.9 L16.2 16.8 L16.3 12.8 Q11 13 10 19.5 Z" fill="url(#gplusG)" stroke="#2e8a1a" stroke-width="1.1"/></svg>
<svg style="position:absolute;left:910.3px;top:122px;" width="8" height="5" viewBox="0 0 8 5"><path d="M0 0 H7.6 L3.8 4Z" fill="#555"/></svg>
<div style="position:absolute;left:1117px;top:140px;width:10px;height:1px;background:#a8a8a8;"></div>
<svg style="position:absolute;left:1117px;top:142px;" width="10" height="6" viewBox="0 0 10 6"><path d="M0 6 L5 0 L10 6Z" fill="#a8a8a8"/></svg>
<svg style="position:absolute;left:10px;top:7px;" width="16" height="17" viewBox="0 0 16 17"><path d="M0.5 0.5 H9 L12.5 4 V15.5 H0.5Z" fill="#fff" stroke="#666"/><path d="M3 1 V6" stroke="#666"/><path d="M3.5 4.5 L7 6.5 L3.5 8.5Z" fill="#2c7bd0"/><rect x="6" y="10" width="5" height="4" fill="#c85a20"/><path d="M2.5 15 L14.5 3" stroke="#b07020" stroke-width="3"/><path d="M2.5 15 L14.5 3" stroke="#f0c070" stroke-width="1.4"/><path d="M1.5 16 L3.5 13.5" stroke="#333" stroke-width="1.2"/><path d="M13.5 2 L15.5 4" stroke="#a050a0" stroke-width="1.5"/></svg>
<svg style="position:absolute;left:976px;top:37px;" width="13" height="16" viewBox="0 0 13 16"><path d="M0.5 0.5 H6 L8.5 3 V10.5 H0.5Z" fill="#fff" stroke="#555"/><path d="M2 4.5h4M2 6.5h4M2 8.5h4" stroke="#666" stroke-width="1"/><path d="M4.5 5.5 H10 L12.5 8 V15.5 H4.5Z" fill="#fff" stroke="#555"/><path d="M6 9.5h5M6 11.5h5M6 13.5h5" stroke="#444" stroke-width="1"/></svg>
<svg style="position:absolute;left:1002px;top:36px;" width="11" height="17" viewBox="0 0 11 17"><path d="M3.2 0.5 L6.2 10.5 M8.3 0.5 L4.8 10.5" stroke="#a8acb4" stroke-width="0.9"/><circle cx="3.3" cy="13.3" r="1.9" fill="none" stroke="#c8301c" stroke-width="1.2"/><circle cx="7.8" cy="13.3" r="1.9" fill="none" stroke="#c8301c" stroke-width="1.2"/></svg>
<svg style="position:absolute;left:1027px;top:37px;" width="15" height="16" viewBox="0 0 15 16"><rect x="0.5" y="2.5" width="10" height="12" fill="#3e5e80" stroke="#34506c"/><rect x="3" y="0.5" width="5" height="3" fill="#5a7a9a" stroke="#34506c"/><rect x="5.5" y="6.5" width="9" height="9" fill="#6a8aaa" stroke="#34506c"/><path d="M7 9h6M7 11h6M7 13h6" stroke="#2a4460" stroke-width="0.9"/></svg>
<svg style="position:absolute;left:1052px;top:37px;" width="17" height="17" viewBox="0 0 17 17"><rect x="0.5" y="0.5" width="12" height="11" fill="#f4f4f4" stroke="#888"/><path d="M2 2.5 L4.5 5 L2 7.5 M5.5 2.5 L8 5 L5.5 7.5" fill="none" stroke="#222" stroke-width="1.2"/><path d="M11.5 9 L12.8 11.8 L15.8 12 L13.5 14 L14.3 16.8 L11.5 15.2 L8.7 16.8 L9.5 14 L7.2 12 L10.2 11.8Z" fill="#6a9ad8" stroke="#3a6aa0" stroke-width="0.6"/></svg>
<svg style="position:absolute;left:1074px;top:44px;" width="8" height="5" viewBox="0 0 8 5"><path d="M0 0 H8 L4 4.5Z" fill="#8a96a4"/></svg>
<svg style="position:absolute;left:1094px;top:37px;" width="16" height="16" viewBox="0 0 16 16"><circle cx="8" cy="8" r="7.5" fill="#f2f4f8" stroke="#c8ccd4" stroke-width="0.8"/><text x="8" y="12.5" text-anchor="middle" font-family="Liberation Sans" font-weight="bold" font-size="12" fill="#1e3e66">?</text></svg>
<div style="position:absolute;left:0px;top:0px;width:1135px;height:976px;border:1px solid #6f6f6f;"></div>
</body></html>
